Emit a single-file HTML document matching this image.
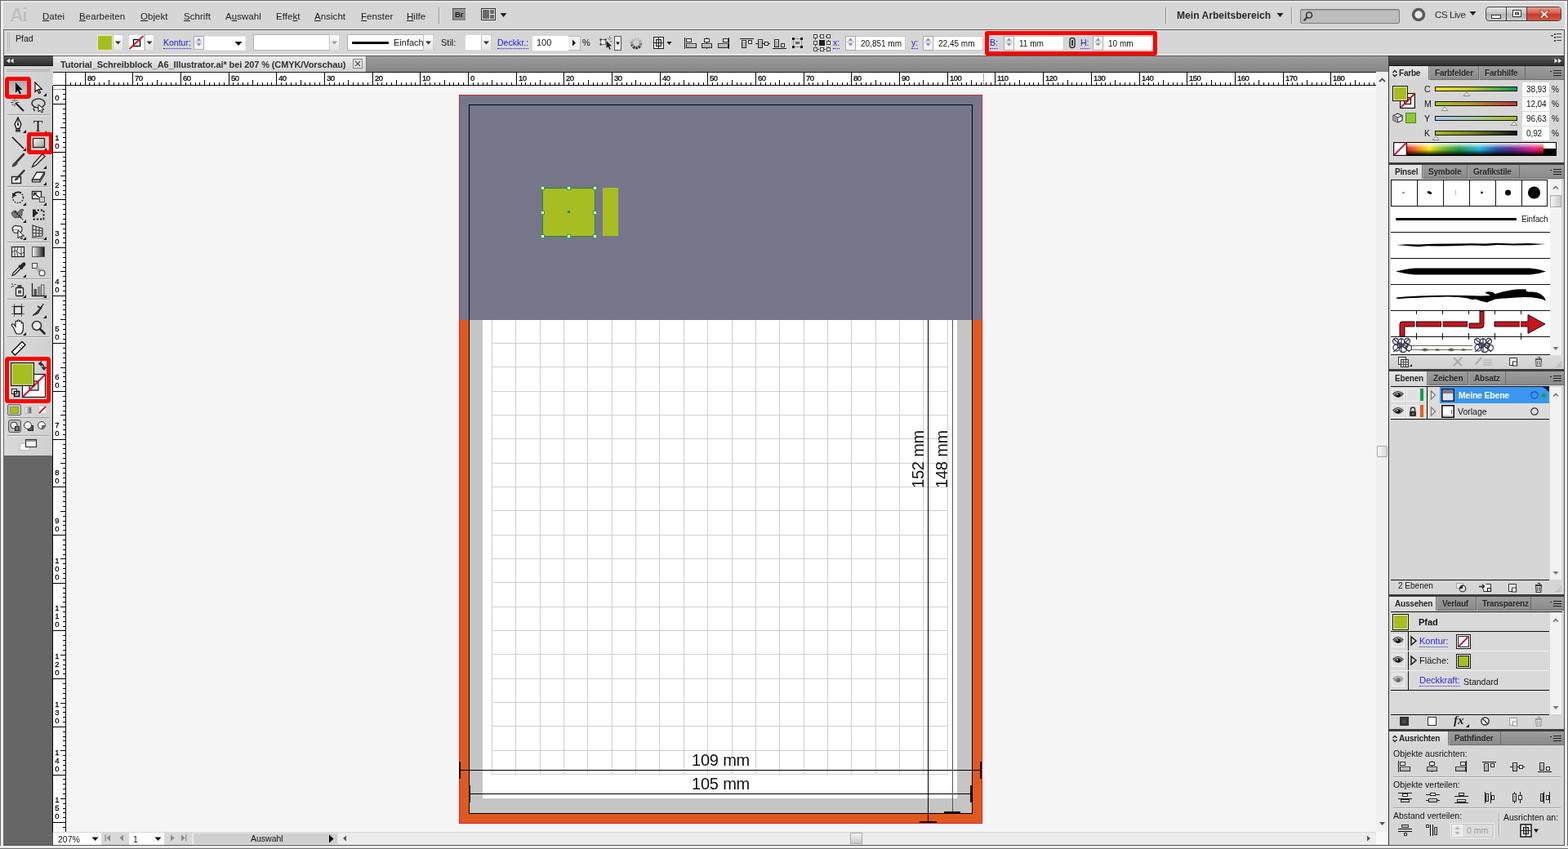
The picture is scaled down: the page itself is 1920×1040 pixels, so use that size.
<!DOCTYPE html>
<html lang="de"><head><meta charset="utf-8"><title>Adobe Illustrator – Tutorial_Schreibblock_A6_Illustrator.ai</title>
<style>
*{box-sizing:border-box;margin:0;padding:0}
html,body{width:1920px;height:1040px;overflow:hidden;background:#d6d6d6}
body{font-family:"Liberation Sans","DejaVu Sans",sans-serif;font-size:11px;color:#111;line-height:1}
#app{will-change:transform;position:relative;width:1920px;height:1040px;overflow:hidden;background:#d6d6d6}
.a{position:absolute}
.t{position:absolute;white-space:nowrap;line-height:1}
svg{position:absolute;overflow:visible}
.blue{color:#2a2ad0}
.dot{border-bottom:1px dotted #2a2ad0}

</style></head>
<body>
<div id="app">
<div class="a" style="left:0px;top:0px;width:1920px;height:1040px;background:#d6d6d6"></div>
<div class="a" style="left:0px;top:0px;width:1920px;height:1px;background:#6a6a6a"></div>
<div class="a" style="left:0px;top:1px;width:1920px;height:2px;background:#e9e9e9"></div>
<div class="a" style="left:0px;top:0px;width:1px;height:1040px;background:#6e6e6e"></div>
<div class="a" style="left:1px;top:1px;width:3px;height:1039px;background:#eeeeee"></div>
<div class="a" style="left:1919px;top:0px;width:1px;height:1040px;background:#606666"></div>
<div class="a" style="left:1916px;top:1px;width:3px;height:1039px;background:#eeeeee"></div>
<div class="a" style="left:0px;top:1036px;width:1920px;height:3px;background:#f6f6f6"></div>
<div class="a" style="left:0px;top:1037px;width:1920px;height:1px;background:#dedede"></div>
<div class="a" style="left:0px;top:1039px;width:1920px;height:1px;background:#6a6a6a"></div>
<div class="a" style="left:4px;top:1035px;width:1912px;height:1px;background:#4e4e4e"></div>
<span class="t " style="left:12px;top:7.5px;font-size:23.5px;color:#c0c0c0;font-weight:bold;letter-spacing:-1.6px;text-shadow:0 1px 0 #ececec">Ai</span>
<span class="t " style="left:52px;top:14.6px;font-size:11.5px;color:#1c1c1c;letter-spacing:0.05px"><u>D</u>atei</span>
<span class="t " style="left:97px;top:14.6px;font-size:11.5px;color:#1c1c1c;letter-spacing:0.05px"><u>B</u>earbeiten</span>
<span class="t " style="left:172px;top:14.6px;font-size:11.5px;color:#1c1c1c;letter-spacing:0.05px"><u>O</u>bjekt</span>
<span class="t " style="left:225px;top:14.6px;font-size:11.5px;color:#1c1c1c;letter-spacing:0.05px"><u>S</u>chrift</span>
<span class="t " style="left:276px;top:14.6px;font-size:11.5px;color:#1c1c1c;letter-spacing:0.05px">A<u>u</u>swahl</span>
<span class="t " style="left:338px;top:14.6px;font-size:11.5px;color:#1c1c1c;letter-spacing:0.05px">Effe<u>k</u>t</span>
<span class="t " style="left:385px;top:14.6px;font-size:11.5px;color:#1c1c1c;letter-spacing:0.05px"><u>A</u>nsicht</span>
<span class="t " style="left:442px;top:14.6px;font-size:11.5px;color:#1c1c1c;letter-spacing:0.05px"><u>F</u>enster</span>
<span class="t " style="left:498px;top:14.6px;font-size:11.5px;color:#1c1c1c;letter-spacing:0.05px"><u>H</u>ilfe</span>
<div class="a" style="left:537px;top:9px;width:1px;height:20px;background:#8e8e8e"></div>
<div class="a" style="left:538px;top:9px;width:1px;height:20px;background:#eee"></div>
<div class="a" style="left:554px;top:10px;width:16px;height:15px;background:linear-gradient(#9a9a9a,#868686);border-top:1px solid #4a4a4a;border-left:1px solid #5a5a5a"></div>
<span class="t " style="left:557px;top:13px;font-size:9.5px;color:#1e1e1e;font-weight:bold;letter-spacing:-0.2px">Br</span>
<svg width="20" height="16" style="left:589px;top:10px" shape-rendering="crispEdges"><rect x="0" y="0" width="18" height="15" fill="#2e2e2e"/><rect x="1" y="1" width="16" height="13" fill="#e8e8e8"/><rect x="2" y="2" width="8" height="11" fill="#6a6a6a"/><rect x="11" y="2" width="5" height="5" fill="#6a6a6a"/><rect x="11" y="8" width="5" height="5" fill="#6a6a6a"/></svg>
<svg width="10" height="8" style="left:612px;top:15px"><path d="M0.5 1 h8 l-4 5 z" fill="#222"/></svg>
<div class="a" style="left:1427px;top:9px;width:1px;height:20px;background:#8e8e8e"></div>
<div class="a" style="left:1428px;top:9px;width:1px;height:20px;background:#eee"></div>
<span class="t " style="left:1441px;top:13px;font-size:12px;color:#2a2a2a;font-weight:bold;letter-spacing:0.05px">Mein Arbeitsbereich</span>
<svg width="10" height="8" style="left:1563px;top:15px"><path d="M0.5 1 h8 l-4 5 z" fill="#222"/></svg>
<div class="a" style="left:1581px;top:9px;width:1px;height:20px;background:#8e8e8e"></div>
<div class="a" style="left:1582px;top:9px;width:1px;height:20px;background:#eee"></div>
<div class="a" style="left:1592px;top:11px;width:122px;height:18px;background:#bdbdbd;border:1px solid #7c7c7c;border-radius:2px;box-shadow:inset 0 1px 1px #a0a0a0"></div>
<svg width="14" height="14" style="left:1595px;top:13px"><circle cx="8" cy="5.5" r="3.5" fill="none" stroke="#333" stroke-width="1.6"/><path d="M5.5 8 L1.5 12.5" stroke="#333" stroke-width="2"/></svg>
<svg width="20" height="20" style="left:1727px;top:8px"><circle cx="10" cy="10" r="6.5" fill="#e8e8e8" stroke="#5a5a5a" stroke-width="3.5"/></svg>
<span class="t " style="left:1757px;top:13px;font-size:11.5px;color:#2a2a2a;letter-spacing:-0.4px">CS Live</span>
<svg width="10" height="8" style="left:1799px;top:13px"><path d="M0.5 1 h8 l-4 5 z" fill="#222"/></svg>
<div class="a" style="left:1819px;top:8px;width:93px;height:18px;border:1px solid #3c3c3c;border-radius:4px;background:linear-gradient(#e4e4e4,#c4c4c4 45%,#b0b0b0 50%,#cfcfcf);box-shadow:0 0 0 1px rgba(255,255,255,.5)"></div>
<div class="a" style="left:1870px;top:9px;width:41px;height:16px;border-radius:0 3px 3px 0;background:linear-gradient(#e8998c,#d9604e 45%,#c83a26 50%,#d8573f)"></div>
<div class="a" style="left:1844px;top:9px;width:1px;height:16px;background:#3c3c3c"></div>
<div class="a" style="left:1869px;top:9px;width:1px;height:16px;background:#3c3c3c"></div>
<svg width="93" height="18" style="left:1819px;top:8px"><rect x="7.5" y="10.5" width="11" height="4" fill="#fff" stroke="#333"/><rect x="33.500" y="4.5" width="10" height="8" fill="#fff" stroke="#333"/><rect x="36.5" y="7.5" width="4" height="2" fill="#bbb" stroke="#333"/><path d="M66 5 l3.5 0 l2.500 3 l2.500 -3 l3.500 0 l-4 4.500 l4 4.500 l-3.500 0 l-2.500 -3 l-2.500 3 l-3.500 0 l4 -4.500 z" fill="#fff" stroke="#6a2a20" stroke-width="0.8"/></svg>
<div class="a" style="left:4px;top:35px;width:1912px;height:1px;background:#e8e8e8"></div>
<div class="a" style="left:4px;top:36px;width:1912px;height:1px;background:#4e4e4e"></div>
<div class="a" style="left:1915px;top:36px;width:1px;height:999px;background:#4e4e4e"></div>
<div class="a" style="left:4px;top:37px;width:1px;height:998px;background:#6a6a6a"></div>
<div class="a" style="left:5px;top:37px;width:1911px;height:30px;background:#d6d6d6"></div>
<div class="a" style="left:5px;top:37px;width:1911px;height:1px;background:#e6e6e6"></div>
<div class="a" style="left:5px;top:66px;width:1911px;height:2px;background:#e9e9e9"></div>
<svg width="4" height="24" style="left:9px;top:40px" shape-rendering="crispEdges"><rect x="0" y="0" width="1" height="1" fill="#a0a0a0"/><rect x="0" y="2" width="1" height="1" fill="#a0a0a0"/><rect x="0" y="4" width="1" height="1" fill="#a0a0a0"/><rect x="0" y="6" width="1" height="1" fill="#a0a0a0"/><rect x="0" y="8" width="1" height="1" fill="#a0a0a0"/><rect x="0" y="10" width="1" height="1" fill="#a0a0a0"/><rect x="0" y="12" width="1" height="1" fill="#a0a0a0"/><rect x="0" y="14" width="1" height="1" fill="#a0a0a0"/><rect x="0" y="16" width="1" height="1" fill="#a0a0a0"/><rect x="0" y="18" width="1" height="1" fill="#a0a0a0"/><rect x="0" y="20" width="1" height="1" fill="#a0a0a0"/><rect x="0" y="22" width="1" height="1" fill="#a0a0a0"/><rect x="2" y="0" width="1" height="1" fill="#a0a0a0"/><rect x="2" y="2" width="1" height="1" fill="#a0a0a0"/><rect x="2" y="4" width="1" height="1" fill="#a0a0a0"/><rect x="2" y="6" width="1" height="1" fill="#a0a0a0"/><rect x="2" y="8" width="1" height="1" fill="#a0a0a0"/><rect x="2" y="10" width="1" height="1" fill="#a0a0a0"/><rect x="2" y="12" width="1" height="1" fill="#a0a0a0"/><rect x="2" y="14" width="1" height="1" fill="#a0a0a0"/><rect x="2" y="16" width="1" height="1" fill="#a0a0a0"/><rect x="2" y="18" width="1" height="1" fill="#a0a0a0"/><rect x="2" y="20" width="1" height="1" fill="#a0a0a0"/><rect x="2" y="22" width="1" height="1" fill="#a0a0a0"/></svg>
<span class="t " style="left:19px;top:41.5px;font-size:10.5px;color:#111;">Pfad</span>
<div class="a" style="left:119px;top:43px;width:19px;height:19px;background:#a8bd22;border:1px solid #f0f0b0"></div>
<div class="a" style="left:138px;top:42px;width:13px;height:20px;background:linear-gradient(#fdfdfd,#e4e4e4);border:1px dotted #b4b4b4;border-left:1px solid #c0c0c0"></div><svg width="13" height="20" style="left:138px;top:42px"><path d="M3.0 8.5 h7 l-3.5 4 z" fill="#333"/></svg>
<div class="a" style="left:157px;top:42px;width:20px;height:20px;background:#fff;border:1px dotted #b8b8b8"></div>
<svg width="20" height="20" style="left:157px;top:42px"><rect x="6.5" y="6.5" width="8" height="8" fill="none" stroke="#000" stroke-width="1.3"/><path d="M1.5 18 L18.5 2" stroke="#d0102a" stroke-width="1.8"/></svg>
<div class="a" style="left:177px;top:42px;width:12px;height:20px;background:linear-gradient(#fdfdfd,#e4e4e4);border:1px dotted #b4b4b4;border-left:1px solid #c0c0c0"></div><svg width="12" height="20" style="left:177px;top:42px"><path d="M2.5 8.5 h7 l-3.5 4 z" fill="#333"/></svg>
<span class="t " style="left:200px;top:47px;font-size:10.5px;color:#1c1ccc;border-bottom:1px dotted #1c1ccc;padding-bottom:1px">Kontur:</span>
<div class="a" style="left:237px;top:44px;width:64px;height:18px;background:#fff;border:1px solid #e8e8e8"></div>
<div class="a" style="left:237px;top:44px;width:13px;height:17px;background:#f4f4f4;border:1px solid #a9a9a9"></div><svg width="13" height="17" style="left:237px;top:44px"><path d="M3.5 6 l3 -3.5 l3 3.5 z" fill="#8a8ac8"/><path d="M3.5 9 l3 3.5 l3 -3.5 z" fill="#8a8ac8"/><rect x="2" y="7" width="9" height="1" fill="#bbb"/></svg>
<svg width="10" height="8" style="left:287px;top:50px"><path d="M0.5 1 h9 l-4.500 5 z" fill="#000"/></svg>
<div class="a" style="left:310px;top:42px;width:94px;height:20px;background:#fff;border:1px solid #b0b0b0"></div>
<div class="a" style="left:403px;top:42px;width:13px;height:20px;background:linear-gradient(#fdfdfd,#e4e4e4);border:1px dotted #b4b4b4;border-left:1px solid #c0c0c0"></div><svg width="13" height="20" style="left:403px;top:42px"><path d="M3.0 8.5 h7 l-3.5 4 z" fill="#999"/></svg>
<div class="a" style="left:425px;top:42px;width:94px;height:20px;background:#fff;border:1px solid #b0b0b0"></div>
<div class="a" style="left:431px;top:51px;width:45px;height:3px;background:#000;border-radius:1px"></div>
<span class="t " style="left:482px;top:47px;font-size:11px;color:#111;">Einfach</span>
<div class="a" style="left:518px;top:42px;width:13px;height:20px;background:linear-gradient(#fdfdfd,#e4e4e4);border:1px dotted #b4b4b4;border-left:1px solid #c0c0c0"></div><svg width="13" height="20" style="left:518px;top:42px"><path d="M3.0 8.5 h7 l-3.5 4 z" fill="#333"/></svg>
<span class="t " style="left:540px;top:47px;font-size:11px;color:#111;">Stil:</span>
<div class="a" style="left:569px;top:42px;width:21px;height:20px;background:#fff;border:1px dotted #b8b8b8"></div>
<div class="a" style="left:589px;top:42px;width:13px;height:20px;background:linear-gradient(#fdfdfd,#e4e4e4);border:1px dotted #b4b4b4;border-left:1px solid #c0c0c0"></div><svg width="13" height="20" style="left:589px;top:42px"><path d="M3.0 8.5 h7 l-3.5 4 z" fill="#333"/></svg>
<span class="t " style="left:609px;top:47px;font-size:10.5px;color:#1c1ccc;border-bottom:1px dotted #1c1ccc;padding-bottom:1px">Deckkr.:</span>
<div class="a" style="left:652px;top:44px;width:44px;height:18px;background:#fff"></div>
<span class="t " style="left:657px;top:47px;font-size:11px;color:#111;">100</span>
<div class="a" style="left:696px;top:44px;width:15px;height:18px;background:#f0f0f0;border:1px solid #b8b8b8;border-left:none"></div>
<svg width="8" height="10" style="left:700px;top:48px"><path d="M1 0.500 l4 4 l-4 4 z" fill="#111"/></svg>
<span class="t " style="left:713px;top:47px;font-size:11px;color:#111;">%</span>
<svg width="30" height="24" style="left:733px;top:40px"><rect x="2.500" y="8.500" width="6" height="6" fill="#e8e8e8" stroke="#777"/><rect x="1.500" y="7.500" width="2" height="2" fill="#222"/><rect x="7.500" y="7.500" width="2" height="2" fill="#222"/><rect x="1.500" y="13.500" width="2" height="2" fill="#222"/><path d="M9.500 10 L9.500 19 L11.700 17 L13.300 20.800 L14.800 20.200 L13.200 16.500 L16 16.300 Z" fill="#1a1a1a"/><path d="M11 6.500 l2.500 2.500 M16 6 l-2 2.500 M17 11 l-3 -0.500 M13.500 4 v3" stroke="#777" stroke-width="1"/><rect x="19.500" y="4.500" width="8" height="17" fill="#ededed" stroke="#555"/><path d="M21 11.500 h5 l-2.500 3.500 z" fill="#111"/></svg>
<svg width="20" height="20" style="left:769px;top:43px"><defs><linearGradient id="wg" x1="0" y1="0" x2="0" y2="1"><stop offset="0" stop-color="#c4c4c4"/><stop offset="0.5" stop-color="#8a8a8a"/><stop offset="1" stop-color="#2a2a2a"/></linearGradient></defs><circle cx="10" cy="10" r="5.500" fill="none" stroke="url(#wg)" stroke-width="3.600" stroke-dasharray="2.400 0.900"/><circle cx="10" cy="10" r="3.300" fill="#d0d0d0"/></svg>
<svg width="26" height="20" style="left:799px;top:43px" shape-rendering="crispEdges"><rect x="1" y="2" width="13" height="15" fill="#222"/><rect x="2" y="3" width="11" height="13" fill="#f4f4f4"/><rect x="4" y="5" width="7" height="9" fill="#222"/><rect x="5" y="6" width="5" height="7" fill="#c8c8c8"/><rect x="7" y="3" width="1" height="13" fill="#222"/><rect x="2" y="9" width="11" height="1" fill="#222"/><path d="M17.500 8 h6 l-3 4 z" fill="#111" shape-rendering="auto"/></svg>
<svg width="18" height="14" viewBox="0 0 18 14" style="left:838px;top:46px" shape-rendering="crispEdges"><rect x="0" y="0" width="1" height="14" fill="#1a1a1a"/><rect x="2" y="1" width="7" height="5" fill="#2a2a2a"/><rect x="3" y="2" width="5" height="3" fill="#f2f2f2"/><rect x="2" y="7" width="13" height="6" fill="#2a2a2a"/><rect x="3" y="8" width="11" height="4" fill="#b4b4b4"/><rect x="3" y="8" width="11" height="1" fill="#e8e8e8"/></svg>
<svg width="18" height="14" viewBox="0 0 18 14" style="left:858px;top:46px" shape-rendering="crispEdges"><rect x="7" y="0" width="1" height="14" fill="#1a1a1a"/><rect x="4" y="1" width="7" height="5" fill="#2a2a2a"/><rect x="5" y="2" width="5" height="3" fill="#f2f2f2"/><rect x="1" y="7" width="13" height="6" fill="#2a2a2a"/><rect x="2" y="8" width="11" height="4" fill="#b4b4b4"/><rect x="2" y="8" width="11" height="1" fill="#e8e8e8"/></svg>
<svg width="18" height="14" viewBox="0 0 18 14" style="left:878px;top:46px" shape-rendering="crispEdges"><rect x="14" y="0" width="1" height="14" fill="#1a1a1a"/><rect x="7" y="1" width="7" height="5" fill="#2a2a2a"/><rect x="8" y="2" width="5" height="3" fill="#f2f2f2"/><rect x="1" y="7" width="13" height="6" fill="#2a2a2a"/><rect x="2" y="8" width="11" height="4" fill="#b4b4b4"/><rect x="2" y="8" width="11" height="1" fill="#e8e8e8"/></svg>
<svg width="18" height="14" viewBox="0 0 18 14" style="left:906px;top:46px" shape-rendering="crispEdges"><rect x="0" y="1" width="17" height="1" fill="#1a1a1a"/><rect x="2" y="3" width="6" height="10" fill="#2a2a2a"/><rect x="3" y="4" width="4" height="8" fill="#b4b4b4"/><rect x="3" y="4" width="4" height="1" fill="#e8e8e8"/><rect x="10" y="3" width="5" height="5" fill="#2a2a2a"/><rect x="11" y="4" width="3" height="3" fill="#f2f2f2"/></svg>
<svg width="18" height="14" viewBox="0 0 18 14" style="left:925px;top:46px" shape-rendering="crispEdges"><rect x="0" y="7" width="18" height="1" fill="#1a1a1a"/><rect x="3" y="2" width="6" height="11" fill="#2a2a2a"/><rect x="4" y="3" width="4" height="9" fill="#b4b4b4"/><rect x="4" y="3" width="4" height="1" fill="#e8e8e8"/><rect x="11" y="5" width="5" height="5" fill="#2a2a2a"/><rect x="12" y="6" width="3" height="3" fill="#f2f2f2"/></svg>
<svg width="18" height="14" viewBox="0 0 18 14" style="left:946px;top:46px" shape-rendering="crispEdges"><rect x="0" y="13" width="17" height="1" fill="#1a1a1a"/><rect x="2" y="2" width="6" height="10" fill="#2a2a2a"/><rect x="3" y="3" width="4" height="8" fill="#b4b4b4"/><rect x="3" y="3" width="4" height="1" fill="#e8e8e8"/><rect x="10" y="7" width="5" height="5" fill="#2a2a2a"/><rect x="11" y="8" width="3" height="3" fill="#f2f2f2"/></svg>
<svg width="16" height="16" style="left:969px;top:45px" shape-rendering="crispEdges"><rect x="1" y="1" width="3" height="3" fill="#111"/><rect x="11" y="1" width="3" height="3" fill="#111"/><rect x="1" y="11" width="3" height="3" fill="#111"/><rect x="11" y="11" width="3" height="3" fill="#111"/><rect x="5" y="6" width="5" height="3" fill="#666"/><path d="M4.500 2.500 h6 M4.500 12.500 h6 M2.500 4.500 v6 M12.500 4.500 v6" stroke="#555" stroke-dasharray="1 1"/></svg>
<svg width="22" height="22" style="left:996px;top:42px" shape-rendering="crispEdges"><rect x="2.500" y="2.500" width="16" height="16" fill="none" stroke="#444" stroke-dasharray="2 2"/><rect x="7" y="7" width="7" height="7" fill="#222"/><rect x="0.5" y="0.5" width="4" height="4" fill="#f4f4f4" stroke="#444"/><rect x="0.5" y="8.5" width="4" height="4" fill="#f4f4f4" stroke="#444"/><rect x="0.5" y="16.5" width="4" height="4" fill="#f4f4f4" stroke="#444"/><rect x="8.5" y="0.5" width="4" height="4" fill="#f4f4f4" stroke="#444"/><rect x="8.5" y="16.5" width="4" height="4" fill="#f4f4f4" stroke="#444"/><rect x="16.5" y="0.5" width="4" height="4" fill="#f4f4f4" stroke="#444"/><rect x="16.5" y="8.5" width="4" height="4" fill="#f4f4f4" stroke="#444"/><rect x="16.5" y="16.5" width="4" height="4" fill="#f4f4f4" stroke="#444"/></svg>
<span class="t " style="left:1020px;top:47px;font-size:10.5px;color:#1c1ccc;border-bottom:1px dotted #1c1ccc;padding-bottom:1px">x:</span><div class="a" style="left:1035px;top:44px;width:74px;height:18px;background:#fff;border:1px solid #c8c8c8"></div><div class="a" style="left:1035px;top:44px;width:13px;height:18px;background:#f4f4f4;border:1px solid #a9a9a9"></div><svg width="13" height="18" style="left:1035px;top:44px"><path d="M3.5 6 l3 -3.5 l3 3.5 z" fill="#8a8ac8"/><path d="M3.5 9 l3 3.5 l3 -3.5 z" fill="#8a8ac8"/><rect x="2" y="7" width="9" height="1" fill="#bbb"/></svg><span class="t " style="left:1054px;top:49px;font-size:10px;color:#111;">20,851 mm</span>
<span class="t " style="left:1116px;top:47px;font-size:10.5px;color:#1c1ccc;border-bottom:1px dotted #1c1ccc;padding-bottom:1px">y:</span><div class="a" style="left:1130px;top:44px;width:74px;height:18px;background:#fff;border:1px solid #c8c8c8"></div><div class="a" style="left:1130px;top:44px;width:13px;height:18px;background:#f4f4f4;border:1px solid #a9a9a9"></div><svg width="13" height="18" style="left:1130px;top:44px"><path d="M3.5 6 l3 -3.5 l3 3.5 z" fill="#8a8ac8"/><path d="M3.5 9 l3 3.5 l3 -3.5 z" fill="#8a8ac8"/><rect x="2" y="7" width="9" height="1" fill="#bbb"/></svg><span class="t " style="left:1149px;top:49px;font-size:10px;color:#111;">22,45 mm</span>
<span class="t " style="left:1212px;top:47px;font-size:10.5px;color:#1c1ccc;border-bottom:1px dotted #1c1ccc;padding-bottom:1px">B:</span><div class="a" style="left:1229px;top:44px;width:74px;height:18px;background:#fff;border:1px solid #c8c8c8"></div><div class="a" style="left:1229px;top:44px;width:13px;height:18px;background:#f4f4f4;border:1px solid #a9a9a9"></div><svg width="13" height="18" style="left:1229px;top:44px"><path d="M3.5 6 l3 -3.5 l3 3.5 z" fill="#8a8ac8"/><path d="M3.5 9 l3 3.5 l3 -3.5 z" fill="#8a8ac8"/><rect x="2" y="7" width="9" height="1" fill="#bbb"/></svg><span class="t " style="left:1248px;top:49px;font-size:10px;color:#111;">11 mm</span>
<svg width="10" height="16" style="left:1308px;top:45px"><rect x="2" y="1.500" width="6" height="12" rx="3" fill="#ddd" stroke="#333" stroke-width="1.500"/><rect x="4" y="4" width="2" height="7" fill="#333"/></svg>
<span class="t " style="left:1323px;top:47px;font-size:10.5px;color:#1c1ccc;border-bottom:1px dotted #1c1ccc;padding-bottom:1px">H:</span><div class="a" style="left:1338px;top:44px;width:74px;height:18px;background:#fff;border:1px solid #c8c8c8"></div><div class="a" style="left:1338px;top:44px;width:13px;height:18px;background:#f4f4f4;border:1px solid #a9a9a9"></div><svg width="13" height="18" style="left:1338px;top:44px"><path d="M3.5 6 l3 -3.5 l3 3.5 z" fill="#8a8ac8"/><path d="M3.5 9 l3 3.5 l3 -3.5 z" fill="#8a8ac8"/><rect x="2" y="7" width="9" height="1" fill="#bbb"/></svg><span class="t " style="left:1357px;top:49px;font-size:10px;color:#111;">10 mm</span>
<div class="a" style="left:1206px;top:38px;width:211px;height:30px;border:5px solid #ff0000;border-radius:3px"></div>
<svg width="14" height="12" style="left:1899px;top:40px" shape-rendering="crispEdges"><path d="M0 3 h3 l-1.500 2 z" fill="#444"/><rect x="4" y="1" width="2" height="2" fill="#444"/><rect x="4" y="5" width="2" height="2" fill="#444"/><rect x="4" y="9" width="2" height="2" fill="#444"/><rect x="7" y="1" width="6" height="1" fill="#444"/><rect x="7" y="5" width="6" height="1" fill="#444"/><rect x="7" y="9" width="6" height="1" fill="#444"/></svg>
<div class="a" style="left:65px;top:68px;width:1635px;height:20px;background:linear-gradient(#9c9c9c,#858585);border-top:1px solid #5a5a5a"></div>
<div class="a" style="left:65px;top:68px;width:384px;height:20px;background:linear-gradient(#ececec,#d2d2d2);border-top:1px solid #666;border-right:1px solid #777"></div>
<span class="t " style="left:74px;top:74px;font-size:11px;color:#303030;font-weight:bold;letter-spacing:-0.1px">Tutorial_Schreibblock_A6_Illustrator.ai* bei 207 % (CMYK/Vorschau)</span>
<svg width="12" height="12" style="left:432px;top:72px"><rect x="0.500" y="0.500" width="11" height="11" fill="#e4e4e4" stroke="#888"/><path d="M3 3 l6 6 M9 3 l-6 6" stroke="#555" stroke-width="1.300"/></svg><div class="a" style="left:5px;top:68px;width:60px;height:13px;background:linear-gradient(#555,#2c2c2c);border-top:1px solid #222;border-bottom:1px solid #1a1a1a"></div>
<svg width="10" height="8" viewBox="0 0 10 8" style="left:8px;top:71px" ><path d="M4 0.500 v6 l-4 -3 z M8.500 0.500 v6 l-4 -3 z" fill="#e8e8e8"/></svg>
<div class="a" style="left:5px;top:81px;width:59px;height:477px;background:linear-gradient(90deg,#d9d9d9,#d0d0d0)"></div>
<div class="a" style="left:5px;top:558px;width:59px;height:477px;background:#666"></div>
<div class="a" style="left:8px;top:85px;width:53px;height:1px;background:#a8a8a8"></div>
<div class="a" style="left:8px;top:87px;width:53px;height:1px;background:#b4b4b4"></div>
<div class="a" style="left:9px;top:140px;width:51px;height:1px;background:#9e9e9e"></div>
<div class="a" style="left:9px;top:141px;width:51px;height:1px;background:#ececec"></div>
<div class="a" style="left:9px;top:228px;width:51px;height:1px;background:#9e9e9e"></div>
<div class="a" style="left:9px;top:229px;width:51px;height:1px;background:#ececec"></div>
<div class="a" style="left:9px;top:296px;width:51px;height:1px;background:#9e9e9e"></div>
<div class="a" style="left:9px;top:297px;width:51px;height:1px;background:#ececec"></div>
<div class="a" style="left:9px;top:341px;width:51px;height:1px;background:#9e9e9e"></div>
<div class="a" style="left:9px;top:342px;width:51px;height:1px;background:#ececec"></div>
<div class="a" style="left:9px;top:366px;width:51px;height:1px;background:#9e9e9e"></div>
<div class="a" style="left:9px;top:367px;width:51px;height:1px;background:#ececec"></div>
<div class="a" style="left:9px;top:412px;width:51px;height:1px;background:#9e9e9e"></div>
<div class="a" style="left:9px;top:413px;width:51px;height:1px;background:#ececec"></div>
<div class="a" style="left:9px;top:533px;width:51px;height:1px;background:#9e9e9e"></div>
<div class="a" style="left:9px;top:534px;width:51px;height:1px;background:#ececec"></div>
<div class="a" style="left:10px;top:98px;width:24px;height:19px;background:linear-gradient(#aaa,#cacaca);border:1px solid #888"></div>
<svg width="20" height="20" viewBox="0 0 20 20" style="left:12px;top:98px" ><path d="M7 3 L7 15.500 L9.800 12.800 L12 17.500 L13.800 16.600 L11.600 12 L15.500 12 Z" fill="#000"/></svg>
<svg width="20" height="20" viewBox="0 0 20 20" style="left:37px;top:98px" ><path d="M6 3 L6 14.500 L8.800 12 L10.800 16.500 L12.500 15.600 L10.500 11.300 L14.300 11.300 Z" fill="#fff" stroke="#111" stroke-width="1.200"/><path d="M20 20 h-4 l4 -4 z" fill="#111"/></svg>
<svg width="20" height="20" viewBox="0 0 20 20" style="left:12px;top:119px" ><path d="M7 7 L17 17" stroke="#222" stroke-width="2.200"/><path d="M6 1.500 v4 M6 8.500 v3 M1 6.500 h3.500 M8 6.500 h3.500 M2.500 3 l2 2 M9.500 3 l-2 2 M2.500 10 l2 -2" stroke="#444" stroke-width="1"/></svg>
<svg width="20" height="20" viewBox="0 0 20 20" style="left:37px;top:119px" ><ellipse cx="10" cy="7.500" rx="8" ry="5.500" fill="none" stroke="#333" stroke-width="1.600"/><path d="M5 12 q-2 3 1 5" fill="none" stroke="#333" stroke-width="1.300"/><path d="M10 9 L10 18 L12.300 15.800 L14 19 L15.500 18.200 L14 15.200 L17 15.200 Z" fill="#fff" stroke="#111" stroke-width="1"/></svg>
<svg width="20" height="20" viewBox="0 0 20 20" style="left:12px;top:143px" ><path d="M10 1 L14 9 L12 14.500 L8 14.500 L6 9 Z" fill="#f4f4f4" stroke="#111" stroke-width="1.300"/><path d="M10 2 v7" stroke="#111"/><circle cx="10" cy="9.500" r="1.200" fill="#111"/><rect x="7" y="15.500" width="6" height="3" fill="#333"/><path d="M20 20 h-4 l4 -4 z" fill="#111"/></svg>
<svg width="24" height="24" viewBox="0 0 24 24" style="left:35px;top:141px" ><text x="11.500" y="19.500" font-family="Liberation Serif,serif" font-size="19" text-anchor="middle" fill="#111">T</text><path d="M22 23 h-4 l4 -4 z" fill="#111"/></svg>
<svg width="20" height="20" viewBox="0 0 20 20" style="left:12px;top:165px" ><path d="M3 3 L17 17" stroke="#111" stroke-width="1.500"/><path d="M20 20 h-4 l4 -4 z" fill="#111"/></svg>
<svg width="20" height="20" viewBox="0 0 20 20" style="left:37px;top:165px" ><defs><linearGradient id="rg" x1="0" y1="0" x2="1" y2="1"><stop offset="0" stop-color="#fff"/><stop offset="1" stop-color="#9a9a9a"/></linearGradient></defs><rect x="3.500" y="4.500" width="14" height="11" fill="url(#rg)" stroke="#222" stroke-width="1.300"/><path d="M20 20 h-4 l4 -4 z" fill="#111"/></svg>
<svg width="20" height="20" viewBox="0 0 20 20" style="left:12px;top:187px" ><path d="M17 2 L8.500 11" stroke="#333" stroke-width="2.600" stroke-linecap="round"/><path d="M8.500 10.500 q-5 1 -6 7 q5 0 7.500 -5 z" fill="#444"/></svg>
<svg width="20" height="20" viewBox="0 0 20 20" style="left:37px;top:187px" ><path d="M15 1.500 L18 4.500 L7 15.500 L2.500 17.500 L4.500 13 Z" fill="#ddd" stroke="#222" stroke-width="1.300"/><path d="M2.500 17.500 L5 16.300 L3.700 15 Z" fill="#111"/><path d="M20 20 h-4 l4 -4 z" fill="#111"/></svg>
<svg width="20" height="20" viewBox="0 0 20 20" style="left:12px;top:207px" ><path d="M2.500 9.500 h11 v8 h-11 z" fill="#f4f4f4" stroke="#222" stroke-width="1.400"/><path d="M17.500 2 L10 10" stroke="#333" stroke-width="2.400" stroke-linecap="round"/><path d="M10 9.500 q-4 1 -4.500 5 q4 0 5.500 -3.500 z" fill="#444"/></svg>
<svg width="20" height="20" viewBox="0 0 20 20" style="left:37px;top:207px" ><path d="M8 4 L17.500 4 L12 13 L2.500 13 Z" fill="#f2f2f2" stroke="#222" stroke-width="1.300"/><path d="M2.500 13 L12 13 L12 16 L2.500 16 Z" fill="#bbb" stroke="#222" stroke-width="1.200"/><path d="M12 13 L17.500 4 L17.500 7 L12 16" fill="#888" stroke="#222" stroke-width="1"/><path d="M20 20 h-4 l4 -4 z" fill="#111"/></svg>
<svg width="20" height="20" viewBox="0 0 20 20" style="left:12px;top:232px" ><circle cx="10" cy="10" r="6.500" fill="none" stroke="#222" stroke-width="1.500" stroke-dasharray="1.600 1.600"/><path d="M4 8.500 A6.500 6.500 0 0 1 14 4.500" fill="none" stroke="#222" stroke-width="1.600"/><path d="M3 4 l0.500 5.500 l5 -2 z" fill="#222"/><path d="M20 20 h-4 l4 -4 z" fill="#111"/></svg>
<svg width="20" height="20" viewBox="0 0 20 20" style="left:37px;top:232px" ><rect x="2.500" y="2.500" width="11" height="9" fill="#eee" stroke="#222" stroke-width="1.300"/><rect x="11.500" y="9.500" width="6" height="6" fill="#ccc" stroke="#555"/><path d="M4.500 4.500 l6 5 M4.500 4.500 h3.500 M4.500 4.500 v3.500" stroke="#111" stroke-width="1.300" fill="none"/><path d="M20 20 h-4 l4 -4 z" fill="#111"/></svg>
<svg width="20" height="20" viewBox="0 0 20 20" style="left:12px;top:253px" ><path d="M2 8 q4 -6 8 0 q2 -6 7 -4 q-3 2 -2 6 q-2 5 -6 3 q-4 3 -7 -5 z" fill="#777" stroke="#444"/><path d="M6 6 L16 16" stroke="#111" stroke-width="1.500" stroke-dasharray="2 1.300"/><path d="M20 20 h-4 l4 -4 z" fill="#111"/></svg>
<svg width="20" height="20" viewBox="0 0 20 20" style="left:37px;top:253px" ><rect x="4.500" y="4.500" width="12" height="11" fill="none" stroke="#111" stroke-width="1.800" stroke-dasharray="2.200 2"/><path d="M3 3 L3 13 L10 8 Z" fill="#222"/></svg>
<svg width="20" height="20" viewBox="0 0 20 20" style="left:12px;top:274px" ><path d="M3 6 q2 -5 7 -3 q5 -1 5 4 q0 4 -5 4 q-6 2 -7 -5 z" fill="#eee" stroke="#333" stroke-width="1.300"/><path d="M4 7.500 h8" stroke="#333" stroke-dasharray="1 1"/><path d="M10 8 L10 18 L12.500 15.500 L14 19 L15.500 18 L14 15 L17.500 15 Z" fill="#fff" stroke="#111"/><path d="M20 20 h-4 l4 -4 z" fill="#111"/></svg>
<svg width="20" height="20" viewBox="0 0 20 20" style="left:37px;top:274px" ><path d="M3 2 L15 6 L15 15 L3 16 Z" fill="#ddd" stroke="#333" stroke-width="1.200"/><path d="M7 3.300 V15.700 M11 4.700 V15.300 M3 7 L15 9 M3 11.500 L15 12" stroke="#333" stroke-width="1"/><path d="M2 17.500 h15" stroke="#888"/><path d="M20 20 h-4 l4 -4 z" fill="#111"/></svg>
<svg width="20" height="20" viewBox="0 0 20 20" style="left:12px;top:299px" ><rect x="2.500" y="3.500" width="15" height="12" fill="#e8e8e8" stroke="#222" stroke-width="1.200"/><path d="M3 10 q4 -4 7 0 q4 4 7 0 M10 4 q-3 5 0 11 M6 4 v11 M14 4 v11" fill="none" stroke="#444" stroke-width="1"/></svg>
<svg width="20" height="20" viewBox="0 0 20 20" style="left:37px;top:299px" ><defs><linearGradient id="gg"><stop offset="0" stop-color="#fff"/><stop offset="1" stop-color="#111"/></linearGradient></defs><rect x="2.500" y="3.500" width="15" height="12" fill="url(#gg)" stroke="#555"/></svg>
<svg width="20" height="20" viewBox="0 0 20 20" style="left:12px;top:320px" ><path d="M3 17.500 L4 14.500 L11.500 7 L13.500 9 L6 16.500 Z" fill="#ddd" stroke="#222" stroke-width="1.200"/><path d="M11 5 L15.500 9.500 M12.500 6.500 L16 3 q2 -1.500 2.500 0.500 q0 1.500 -1.500 2 L14 9" fill="#333" stroke="#222" stroke-width="2"/><path d="M20 20 h-4 l4 -4 z" fill="#111"/></svg>
<svg width="20" height="20" viewBox="0 0 20 20" style="left:37px;top:320px" ><rect x="2.500" y="2.500" width="6" height="6" fill="#eee" stroke="#444"/><rect x="6" y="6" width="5" height="5" fill="#aaa" opacity=".6"/><rect x="9" y="9" width="4" height="4" fill="#888" opacity=".5"/><circle cx="14.500" cy="14.500" r="3.500" fill="#eee" stroke="#444" stroke-width="1.200"/></svg>
<svg width="20" height="20" viewBox="0 0 20 20" style="left:12px;top:345px" ><rect x="7.500" y="7.500" width="9" height="10" rx="1" fill="#eee" stroke="#222" stroke-width="1.300"/><rect x="10" y="10.500" width="4" height="4" fill="#555"/><rect x="9.500" y="4" width="5" height="3" fill="#444"/><path d="M2 3 h2 M3 5.500 h2 M5.500 3.500 h2 M1.500 6.500 h1.500" stroke="#333" stroke-width="1.200"/><path d="M20 20 h-4 l4 -4 z" fill="#111"/></svg>
<svg width="20" height="20" viewBox="0 0 20 20" style="left:37px;top:345px" ><path d="M2.500 2 V17.500 H18" fill="none" stroke="#222" stroke-width="1.300"/><rect x="4.500" y="9" width="3.500" height="8" fill="#555"/><rect x="9" y="6" width="3.500" height="11" fill="#888"/><rect x="13.500" y="4" width="3.500" height="13" fill="#ccc" stroke="#444" stroke-width=".8"/><path d="M20 20 h-4 l4 -4 z" fill="#111"/></svg>
<svg width="20" height="20" viewBox="0 0 20 20" style="left:12px;top:370px" ><rect x="5.500" y="5.500" width="9" height="9" fill="#e4e4e4" stroke="#111" stroke-width="1.400"/><path d="M5.500 2 v3 M14.500 2 v3 M5.500 15 v3 M14.500 15 v3 M2 5.500 h3 M2 14.500 h3 M15 5.500 h3 M15 14.500 h3" stroke="#666"/></svg>
<svg width="20" height="20" viewBox="0 0 20 20" style="left:37px;top:370px" ><path d="M16.500 2 L8 12 L3 16.500 L9.500 14 Z" fill="#444" stroke="#222"/><path d="M9 5 l5 3" stroke="#222" stroke-width="1.500"/><path d="M20 20 h-4 l4 -4 z" fill="#111"/></svg>
<svg width="20" height="20" viewBox="0 0 20 20" style="left:12px;top:391px" ><path d="M5 11 L3 8.500 q-1.500 -1.500 0 -2.500 q1.500 -0.500 2.500 1 L7 9 V3.500 q0 -1.500 1.200 -1.500 q1.200 0 1.200 1.500 V2.500 q0 -1.500 1.200 -1.500 q1.200 0 1.200 1.500 V3.500 q0 -1.500 1.200 -1.500 q1.200 0 1.200 1.500 V5.500 q0 -1.300 1.100 -1.300 q1.100 0 1.100 1.300 V12 q0 4 -3 6 H8.500 q-2 -2 -3.500 -7 z" fill="#fafafa" stroke="#222" stroke-width="1.200"/><path d="M20 20 h-4 l4 -4 z" fill="#111"/></svg>
<svg width="20" height="20" viewBox="0 0 20 20" style="left:37px;top:391px" ><circle cx="8" cy="8" r="5.500" fill="#e8e8e8" stroke="#333" stroke-width="1.500"/><path d="M12 12 L17.500 17.500" stroke="#222" stroke-width="2.600" stroke-linecap="round"/></svg>
<svg width="22" height="22" viewBox="0 0 22 22" style="left:12px;top:416px" ><path d="M15 2.500 L19 6.500 L6.500 19 L2.500 15 Z" fill="#fff" stroke="#111" stroke-width="1.500" stroke-linejoin="round"/><path d="M14 7 l1.500 1.500 M12 9 l1.500 1.500" stroke="#333"/></svg>
<svg width="62" height="60" viewBox="0 0 62 60" style="left:4px;top:436px" ><rect x="23.500" y="22.500" width="28" height="28" fill="#fff" stroke="#111" stroke-width="1.200"/><rect x="32" y="31" width="11" height="11" fill="#d8d8d8" stroke="#111" stroke-width="1.200"/><path d="M24 50 L51 23" stroke="#d0102a" stroke-width="2"/><rect x="9" y="8" width="29" height="29" fill="#111"/><rect x="10.200" y="9.200" width="26.600" height="26.600" fill="#f4f4c0"/><rect x="11.200" y="10.200" width="24.600" height="24.600" fill="#a8bd22"/><path d="M45 9 q4 0 5 5 M43.500 9.500 l3 -2.500 v5 z M50 17 l-2.500 -3 h5 z" fill="#333" stroke="#333" stroke-width="1.200"/><rect x="10.500" y="40.500" width="6" height="6" fill="#fff" stroke="#222"/><rect x="13.500" y="43.500" width="6" height="6" fill="none" stroke="#111" stroke-width="1.600"/></svg>
<div class="a" style="left:6px;top:437px;width:56px;height:57px;border:5px solid #ff0000;border-radius:4px"></div>
<div class="a" style="left:9px;top:495px;width:17px;height:14px;background:#c4c4c4;border:1px solid #666;border-radius:2px"></div>
<div class="a" style="left:12px;top:498px;width:11px;height:9px;background:#a8bd22;border:1px solid #8a9a30"></div>
<div class="a" style="left:30px;top:498px;width:9px;height:9px;background:linear-gradient(90deg,#fff,#555);border:1px solid #bbb"></div>
<svg width="10" height="10" viewBox="0 0 10 10" style="left:47px;top:497px" ><rect x="0.500" y="0.500" width="9" height="9" fill="#fff" stroke="#ccc"/><path d="M1 9 L9 1" stroke="#d0102a" stroke-width="1.800"/></svg>
<div class="a" style="left:9px;top:511px;width:51px;height:1px;background:#9e9e9e"></div>
<div class="a" style="left:10px;top:514px;width:16px;height:16px;background:#bdbdbd;border:1px solid #555;border-radius:3px"></div>
<svg width="14" height="14" viewBox="0 0 14 14" style="left:11px;top:515px" ><circle cx="6" cy="6" r="4" fill="#f2f2f2" stroke="#333"/><rect x="7.500" y="7.500" width="5" height="5" fill="#777" stroke="#222"/></svg>
<svg width="14" height="14" viewBox="0 0 14 14" style="left:28px;top:515px" ><rect x="6.500" y="6.500" width="6" height="6" fill="#555" stroke="#222"/><circle cx="6" cy="6" r="4.500" fill="#f2f2f2" stroke="#333"/></svg>
<svg width="14" height="14" viewBox="0 0 14 14" style="left:45px;top:515px" ><circle cx="6" cy="6" r="4.500" fill="#f2f2f2" stroke="#333"/><path d="M6 6 h4.500 a4.500 4.500 0 0 1 -4.500 4.500 z" fill="#666"/></svg>
<svg width="24" height="18" viewBox="0 0 24 18" style="left:23px;top:537px" ><rect x="1.500" y="6.500" width="12" height="8" fill="#fafafa" stroke="#bbb"/><rect x="8.500" y="1.500" width="13" height="9" fill="#f4f4f4" stroke="#333" stroke-width="1.200"/><rect x="9" y="2" width="12" height="2" fill="#999"/></svg>
<div class="a" style="left:6px;top:94px;width:32px;height:27px;border:5px solid #ff0000;border-radius:4px"></div>
<div class="a" style="left:33px;top:162px;width:32px;height:27px;border:5px solid #ff0000;border-radius:4px"></div><div class="a" id="canvas" style="left:81px;top:105px;width:1604px;height:914px;background:#f5f5f5"></div>
<div class="a" style="left:81px;top:105px;width:1604px;height:4px;background:#fff;border-top:1px solid #fdfdfd"></div>
<div class="a" style="left:81px;top:107px;width:1604px;height:1px;background:#efefef"></div>
<div class="a" id="hruler" style="left:65px;top:88px;width:1620px;height:17px;background:#fff;border-top:1px solid #1a1a1a;border-bottom:1px solid #000;overflow:hidden">
<svg width="1620" height="15" style="left:0;top:0" shape-rendering="crispEdges">
<rect x="15" y="0" width="1" height="15" fill="#000"/>
<rect x="1139" y="1" width="1" height="1" fill="#444"/><rect x="1139" y="3" width="1" height="1" fill="#444"/><rect x="1139" y="5" width="1" height="1" fill="#444"/><rect x="1139" y="7" width="1" height="1" fill="#444"/><rect x="1139" y="9" width="1" height="1" fill="#444"/><rect x="1139" y="11" width="1" height="1" fill="#444"/><rect x="1139" y="13" width="1" height="1" fill="#444"/>
<rect x="21" y="12" width="1" height="3" fill="#000"/>
<rect x="27" y="12" width="1" height="3" fill="#000"/>
<rect x="33" y="12" width="1" height="3" fill="#000"/>
<rect x="39" y="0" width="1" height="15" fill="#000"/>
<rect x="44" y="12" width="1" height="3" fill="#000"/>
<rect x="50" y="12" width="1" height="3" fill="#000"/>
<rect x="56" y="12" width="1" height="3" fill="#000"/>
<rect x="62" y="12" width="1" height="3" fill="#000"/>
<rect x="68" y="9" width="1" height="6" fill="#000"/>
<rect x="74" y="12" width="1" height="3" fill="#000"/>
<rect x="80" y="12" width="1" height="3" fill="#000"/>
<rect x="86" y="12" width="1" height="3" fill="#000"/>
<rect x="91" y="12" width="1" height="3" fill="#000"/>
<rect x="97" y="0" width="1" height="15" fill="#000"/>
<rect x="103" y="12" width="1" height="3" fill="#000"/>
<rect x="109" y="12" width="1" height="3" fill="#000"/>
<rect x="115" y="12" width="1" height="3" fill="#000"/>
<rect x="121" y="12" width="1" height="3" fill="#000"/>
<rect x="127" y="9" width="1" height="6" fill="#000"/>
<rect x="132" y="12" width="1" height="3" fill="#000"/>
<rect x="138" y="12" width="1" height="3" fill="#000"/>
<rect x="144" y="12" width="1" height="3" fill="#000"/>
<rect x="150" y="12" width="1" height="3" fill="#000"/>
<rect x="156" y="0" width="1" height="15" fill="#000"/>
<rect x="162" y="12" width="1" height="3" fill="#000"/>
<rect x="168" y="12" width="1" height="3" fill="#000"/>
<rect x="174" y="12" width="1" height="3" fill="#000"/>
<rect x="179" y="12" width="1" height="3" fill="#000"/>
<rect x="185" y="9" width="1" height="6" fill="#000"/>
<rect x="191" y="12" width="1" height="3" fill="#000"/>
<rect x="197" y="12" width="1" height="3" fill="#000"/>
<rect x="203" y="12" width="1" height="3" fill="#000"/>
<rect x="209" y="12" width="1" height="3" fill="#000"/>
<rect x="215" y="0" width="1" height="15" fill="#000"/>
<rect x="220" y="12" width="1" height="3" fill="#000"/>
<rect x="226" y="12" width="1" height="3" fill="#000"/>
<rect x="232" y="12" width="1" height="3" fill="#000"/>
<rect x="238" y="12" width="1" height="3" fill="#000"/>
<rect x="244" y="9" width="1" height="6" fill="#000"/>
<rect x="250" y="12" width="1" height="3" fill="#000"/>
<rect x="256" y="12" width="1" height="3" fill="#000"/>
<rect x="262" y="12" width="1" height="3" fill="#000"/>
<rect x="267" y="12" width="1" height="3" fill="#000"/>
<rect x="273" y="0" width="1" height="15" fill="#000"/>
<rect x="279" y="12" width="1" height="3" fill="#000"/>
<rect x="285" y="12" width="1" height="3" fill="#000"/>
<rect x="291" y="12" width="1" height="3" fill="#000"/>
<rect x="297" y="12" width="1" height="3" fill="#000"/>
<rect x="303" y="9" width="1" height="6" fill="#000"/>
<rect x="308" y="12" width="1" height="3" fill="#000"/>
<rect x="314" y="12" width="1" height="3" fill="#000"/>
<rect x="320" y="12" width="1" height="3" fill="#000"/>
<rect x="326" y="12" width="1" height="3" fill="#000"/>
<rect x="332" y="0" width="1" height="15" fill="#000"/>
<rect x="338" y="12" width="1" height="3" fill="#000"/>
<rect x="344" y="12" width="1" height="3" fill="#000"/>
<rect x="350" y="12" width="1" height="3" fill="#000"/>
<rect x="355" y="12" width="1" height="3" fill="#000"/>
<rect x="361" y="9" width="1" height="6" fill="#000"/>
<rect x="367" y="12" width="1" height="3" fill="#000"/>
<rect x="373" y="12" width="1" height="3" fill="#000"/>
<rect x="379" y="12" width="1" height="3" fill="#000"/>
<rect x="385" y="12" width="1" height="3" fill="#000"/>
<rect x="391" y="0" width="1" height="15" fill="#000"/>
<rect x="397" y="12" width="1" height="3" fill="#000"/>
<rect x="402" y="12" width="1" height="3" fill="#000"/>
<rect x="408" y="12" width="1" height="3" fill="#000"/>
<rect x="414" y="12" width="1" height="3" fill="#000"/>
<rect x="420" y="9" width="1" height="6" fill="#000"/>
<rect x="426" y="12" width="1" height="3" fill="#000"/>
<rect x="432" y="12" width="1" height="3" fill="#000"/>
<rect x="438" y="12" width="1" height="3" fill="#000"/>
<rect x="443" y="12" width="1" height="3" fill="#000"/>
<rect x="449" y="0" width="1" height="15" fill="#000"/>
<rect x="455" y="12" width="1" height="3" fill="#000"/>
<rect x="461" y="12" width="1" height="3" fill="#000"/>
<rect x="467" y="12" width="1" height="3" fill="#000"/>
<rect x="473" y="12" width="1" height="3" fill="#000"/>
<rect x="479" y="9" width="1" height="6" fill="#000"/>
<rect x="485" y="12" width="1" height="3" fill="#000"/>
<rect x="490" y="12" width="1" height="3" fill="#000"/>
<rect x="496" y="12" width="1" height="3" fill="#000"/>
<rect x="502" y="12" width="1" height="3" fill="#000"/>
<rect x="508" y="0" width="1" height="15" fill="#000"/>
<rect x="514" y="12" width="1" height="3" fill="#000"/>
<rect x="520" y="12" width="1" height="3" fill="#000"/>
<rect x="526" y="12" width="1" height="3" fill="#000"/>
<rect x="531" y="12" width="1" height="3" fill="#000"/>
<rect x="537" y="9" width="1" height="6" fill="#000"/>
<rect x="543" y="12" width="1" height="3" fill="#000"/>
<rect x="549" y="12" width="1" height="3" fill="#000"/>
<rect x="555" y="12" width="1" height="3" fill="#000"/>
<rect x="561" y="12" width="1" height="3" fill="#000"/>
<rect x="567" y="0" width="1" height="15" fill="#000"/>
<rect x="573" y="12" width="1" height="3" fill="#000"/>
<rect x="578" y="12" width="1" height="3" fill="#000"/>
<rect x="584" y="12" width="1" height="3" fill="#000"/>
<rect x="590" y="12" width="1" height="3" fill="#000"/>
<rect x="596" y="9" width="1" height="6" fill="#000"/>
<rect x="602" y="12" width="1" height="3" fill="#000"/>
<rect x="608" y="12" width="1" height="3" fill="#000"/>
<rect x="614" y="12" width="1" height="3" fill="#000"/>
<rect x="619" y="12" width="1" height="3" fill="#000"/>
<rect x="625" y="0" width="1" height="15" fill="#000"/>
<rect x="631" y="12" width="1" height="3" fill="#000"/>
<rect x="637" y="12" width="1" height="3" fill="#000"/>
<rect x="643" y="12" width="1" height="3" fill="#000"/>
<rect x="649" y="12" width="1" height="3" fill="#000"/>
<rect x="655" y="9" width="1" height="6" fill="#000"/>
<rect x="661" y="12" width="1" height="3" fill="#000"/>
<rect x="666" y="12" width="1" height="3" fill="#000"/>
<rect x="672" y="12" width="1" height="3" fill="#000"/>
<rect x="678" y="12" width="1" height="3" fill="#000"/>
<rect x="684" y="0" width="1" height="15" fill="#000"/>
<rect x="690" y="12" width="1" height="3" fill="#000"/>
<rect x="696" y="12" width="1" height="3" fill="#000"/>
<rect x="702" y="12" width="1" height="3" fill="#000"/>
<rect x="708" y="12" width="1" height="3" fill="#000"/>
<rect x="713" y="9" width="1" height="6" fill="#000"/>
<rect x="719" y="12" width="1" height="3" fill="#000"/>
<rect x="725" y="12" width="1" height="3" fill="#000"/>
<rect x="731" y="12" width="1" height="3" fill="#000"/>
<rect x="737" y="12" width="1" height="3" fill="#000"/>
<rect x="743" y="0" width="1" height="15" fill="#000"/>
<rect x="749" y="12" width="1" height="3" fill="#000"/>
<rect x="754" y="12" width="1" height="3" fill="#000"/>
<rect x="760" y="12" width="1" height="3" fill="#000"/>
<rect x="766" y="12" width="1" height="3" fill="#000"/>
<rect x="772" y="9" width="1" height="6" fill="#000"/>
<rect x="778" y="12" width="1" height="3" fill="#000"/>
<rect x="784" y="12" width="1" height="3" fill="#000"/>
<rect x="790" y="12" width="1" height="3" fill="#000"/>
<rect x="796" y="12" width="1" height="3" fill="#000"/>
<rect x="801" y="0" width="1" height="15" fill="#000"/>
<rect x="807" y="12" width="1" height="3" fill="#000"/>
<rect x="813" y="12" width="1" height="3" fill="#000"/>
<rect x="819" y="12" width="1" height="3" fill="#000"/>
<rect x="825" y="12" width="1" height="3" fill="#000"/>
<rect x="831" y="9" width="1" height="6" fill="#000"/>
<rect x="837" y="12" width="1" height="3" fill="#000"/>
<rect x="842" y="12" width="1" height="3" fill="#000"/>
<rect x="848" y="12" width="1" height="3" fill="#000"/>
<rect x="854" y="12" width="1" height="3" fill="#000"/>
<rect x="860" y="0" width="1" height="15" fill="#000"/>
<rect x="866" y="12" width="1" height="3" fill="#000"/>
<rect x="872" y="12" width="1" height="3" fill="#000"/>
<rect x="878" y="12" width="1" height="3" fill="#000"/>
<rect x="884" y="12" width="1" height="3" fill="#000"/>
<rect x="889" y="9" width="1" height="6" fill="#000"/>
<rect x="895" y="12" width="1" height="3" fill="#000"/>
<rect x="901" y="12" width="1" height="3" fill="#000"/>
<rect x="907" y="12" width="1" height="3" fill="#000"/>
<rect x="913" y="12" width="1" height="3" fill="#000"/>
<rect x="919" y="0" width="1" height="15" fill="#000"/>
<rect x="925" y="12" width="1" height="3" fill="#000"/>
<rect x="930" y="12" width="1" height="3" fill="#000"/>
<rect x="936" y="12" width="1" height="3" fill="#000"/>
<rect x="942" y="12" width="1" height="3" fill="#000"/>
<rect x="948" y="9" width="1" height="6" fill="#000"/>
<rect x="954" y="12" width="1" height="3" fill="#000"/>
<rect x="960" y="12" width="1" height="3" fill="#000"/>
<rect x="966" y="12" width="1" height="3" fill="#000"/>
<rect x="972" y="12" width="1" height="3" fill="#000"/>
<rect x="977" y="0" width="1" height="15" fill="#000"/>
<rect x="983" y="12" width="1" height="3" fill="#000"/>
<rect x="989" y="12" width="1" height="3" fill="#000"/>
<rect x="995" y="12" width="1" height="3" fill="#000"/>
<rect x="1001" y="12" width="1" height="3" fill="#000"/>
<rect x="1007" y="9" width="1" height="6" fill="#000"/>
<rect x="1013" y="12" width="1" height="3" fill="#000"/>
<rect x="1019" y="12" width="1" height="3" fill="#000"/>
<rect x="1024" y="12" width="1" height="3" fill="#000"/>
<rect x="1030" y="12" width="1" height="3" fill="#000"/>
<rect x="1036" y="0" width="1" height="15" fill="#000"/>
<rect x="1042" y="12" width="1" height="3" fill="#000"/>
<rect x="1048" y="12" width="1" height="3" fill="#000"/>
<rect x="1054" y="12" width="1" height="3" fill="#000"/>
<rect x="1060" y="12" width="1" height="3" fill="#000"/>
<rect x="1065" y="9" width="1" height="6" fill="#000"/>
<rect x="1071" y="12" width="1" height="3" fill="#000"/>
<rect x="1077" y="12" width="1" height="3" fill="#000"/>
<rect x="1083" y="12" width="1" height="3" fill="#000"/>
<rect x="1089" y="12" width="1" height="3" fill="#000"/>
<rect x="1095" y="0" width="1" height="15" fill="#000"/>
<rect x="1101" y="12" width="1" height="3" fill="#000"/>
<rect x="1107" y="12" width="1" height="3" fill="#000"/>
<rect x="1112" y="12" width="1" height="3" fill="#000"/>
<rect x="1118" y="12" width="1" height="3" fill="#000"/>
<rect x="1124" y="9" width="1" height="6" fill="#000"/>
<rect x="1130" y="12" width="1" height="3" fill="#000"/>
<rect x="1136" y="12" width="1" height="3" fill="#000"/>
<rect x="1142" y="12" width="1" height="3" fill="#000"/>
<rect x="1148" y="12" width="1" height="3" fill="#000"/>
<rect x="1153" y="0" width="1" height="15" fill="#000"/>
<rect x="1159" y="12" width="1" height="3" fill="#000"/>
<rect x="1165" y="12" width="1" height="3" fill="#000"/>
<rect x="1171" y="12" width="1" height="3" fill="#000"/>
<rect x="1177" y="12" width="1" height="3" fill="#000"/>
<rect x="1183" y="9" width="1" height="6" fill="#000"/>
<rect x="1189" y="12" width="1" height="3" fill="#000"/>
<rect x="1195" y="12" width="1" height="3" fill="#000"/>
<rect x="1200" y="12" width="1" height="3" fill="#000"/>
<rect x="1206" y="12" width="1" height="3" fill="#000"/>
<rect x="1212" y="0" width="1" height="15" fill="#000"/>
<rect x="1218" y="12" width="1" height="3" fill="#000"/>
<rect x="1224" y="12" width="1" height="3" fill="#000"/>
<rect x="1230" y="12" width="1" height="3" fill="#000"/>
<rect x="1236" y="12" width="1" height="3" fill="#000"/>
<rect x="1242" y="9" width="1" height="6" fill="#000"/>
<rect x="1247" y="12" width="1" height="3" fill="#000"/>
<rect x="1253" y="12" width="1" height="3" fill="#000"/>
<rect x="1259" y="12" width="1" height="3" fill="#000"/>
<rect x="1265" y="12" width="1" height="3" fill="#000"/>
<rect x="1271" y="0" width="1" height="15" fill="#000"/>
<rect x="1277" y="12" width="1" height="3" fill="#000"/>
<rect x="1283" y="12" width="1" height="3" fill="#000"/>
<rect x="1288" y="12" width="1" height="3" fill="#000"/>
<rect x="1294" y="12" width="1" height="3" fill="#000"/>
<rect x="1300" y="9" width="1" height="6" fill="#000"/>
<rect x="1306" y="12" width="1" height="3" fill="#000"/>
<rect x="1312" y="12" width="1" height="3" fill="#000"/>
<rect x="1318" y="12" width="1" height="3" fill="#000"/>
<rect x="1324" y="12" width="1" height="3" fill="#000"/>
<rect x="1330" y="0" width="1" height="15" fill="#000"/>
<rect x="1335" y="12" width="1" height="3" fill="#000"/>
<rect x="1341" y="12" width="1" height="3" fill="#000"/>
<rect x="1347" y="12" width="1" height="3" fill="#000"/>
<rect x="1353" y="12" width="1" height="3" fill="#000"/>
<rect x="1359" y="9" width="1" height="6" fill="#000"/>
<rect x="1365" y="12" width="1" height="3" fill="#000"/>
<rect x="1371" y="12" width="1" height="3" fill="#000"/>
<rect x="1376" y="12" width="1" height="3" fill="#000"/>
<rect x="1382" y="12" width="1" height="3" fill="#000"/>
<rect x="1388" y="0" width="1" height="15" fill="#000"/>
<rect x="1394" y="12" width="1" height="3" fill="#000"/>
<rect x="1400" y="12" width="1" height="3" fill="#000"/>
<rect x="1406" y="12" width="1" height="3" fill="#000"/>
<rect x="1412" y="12" width="1" height="3" fill="#000"/>
<rect x="1418" y="9" width="1" height="6" fill="#000"/>
<rect x="1423" y="12" width="1" height="3" fill="#000"/>
<rect x="1429" y="12" width="1" height="3" fill="#000"/>
<rect x="1435" y="12" width="1" height="3" fill="#000"/>
<rect x="1441" y="12" width="1" height="3" fill="#000"/>
<rect x="1447" y="0" width="1" height="15" fill="#000"/>
<rect x="1453" y="12" width="1" height="3" fill="#000"/>
<rect x="1459" y="12" width="1" height="3" fill="#000"/>
<rect x="1464" y="12" width="1" height="3" fill="#000"/>
<rect x="1470" y="12" width="1" height="3" fill="#000"/>
<rect x="1476" y="9" width="1" height="6" fill="#000"/>
<rect x="1482" y="12" width="1" height="3" fill="#000"/>
<rect x="1488" y="12" width="1" height="3" fill="#000"/>
<rect x="1494" y="12" width="1" height="3" fill="#000"/>
<rect x="1500" y="12" width="1" height="3" fill="#000"/>
<rect x="1506" y="0" width="1" height="15" fill="#000"/>
<rect x="1511" y="12" width="1" height="3" fill="#000"/>
<rect x="1517" y="12" width="1" height="3" fill="#000"/>
<rect x="1523" y="12" width="1" height="3" fill="#000"/>
<rect x="1529" y="12" width="1" height="3" fill="#000"/>
<rect x="1535" y="9" width="1" height="6" fill="#000"/>
<rect x="1541" y="12" width="1" height="3" fill="#000"/>
<rect x="1547" y="12" width="1" height="3" fill="#000"/>
<rect x="1553" y="12" width="1" height="3" fill="#000"/>
<rect x="1558" y="12" width="1" height="3" fill="#000"/>
<rect x="1564" y="0" width="1" height="15" fill="#000"/>
<rect x="1570" y="12" width="1" height="3" fill="#000"/>
<rect x="1576" y="12" width="1" height="3" fill="#000"/>
<rect x="1582" y="12" width="1" height="3" fill="#000"/>
<rect x="1588" y="12" width="1" height="3" fill="#000"/>
<rect x="1594" y="9" width="1" height="6" fill="#000"/>
<rect x="1599" y="12" width="1" height="3" fill="#000"/>
<rect x="1605" y="12" width="1" height="3" fill="#000"/>
<rect x="1611" y="12" width="1" height="3" fill="#000"/>
<rect x="1617" y="12" width="1" height="3" fill="#000"/>
</svg>
<span class="t" style="left:42px;top:1.5px;font-size:9.5px;letter-spacing:-0.5px;color:#000;-webkit-text-stroke:0.3px #111">80</span>
<span class="t" style="left:100px;top:1.5px;font-size:9.5px;letter-spacing:-0.5px;color:#000;-webkit-text-stroke:0.3px #111">70</span>
<span class="t" style="left:159px;top:1.5px;font-size:9.5px;letter-spacing:-0.5px;color:#000;-webkit-text-stroke:0.3px #111">60</span>
<span class="t" style="left:218px;top:1.5px;font-size:9.5px;letter-spacing:-0.5px;color:#000;-webkit-text-stroke:0.3px #111">50</span>
<span class="t" style="left:276px;top:1.5px;font-size:9.5px;letter-spacing:-0.5px;color:#000;-webkit-text-stroke:0.3px #111">40</span>
<span class="t" style="left:335px;top:1.5px;font-size:9.5px;letter-spacing:-0.5px;color:#000;-webkit-text-stroke:0.3px #111">30</span>
<span class="t" style="left:394px;top:1.5px;font-size:9.5px;letter-spacing:-0.5px;color:#000;-webkit-text-stroke:0.3px #111">20</span>
<span class="t" style="left:452px;top:1.5px;font-size:9.5px;letter-spacing:-0.5px;color:#000;-webkit-text-stroke:0.3px #111">10</span>
<span class="t" style="left:511px;top:1.5px;font-size:9.5px;letter-spacing:-0.5px;color:#000;-webkit-text-stroke:0.3px #111">0</span>
<span class="t" style="left:570px;top:1.5px;font-size:9.5px;letter-spacing:-0.5px;color:#000;-webkit-text-stroke:0.3px #111">10</span>
<span class="t" style="left:628px;top:1.5px;font-size:9.5px;letter-spacing:-0.5px;color:#000;-webkit-text-stroke:0.3px #111">20</span>
<span class="t" style="left:687px;top:1.5px;font-size:9.5px;letter-spacing:-0.5px;color:#000;-webkit-text-stroke:0.3px #111">30</span>
<span class="t" style="left:746px;top:1.5px;font-size:9.5px;letter-spacing:-0.5px;color:#000;-webkit-text-stroke:0.3px #111">40</span>
<span class="t" style="left:804px;top:1.5px;font-size:9.5px;letter-spacing:-0.5px;color:#000;-webkit-text-stroke:0.3px #111">50</span>
<span class="t" style="left:863px;top:1.5px;font-size:9.5px;letter-spacing:-0.5px;color:#000;-webkit-text-stroke:0.3px #111">60</span>
<span class="t" style="left:922px;top:1.5px;font-size:9.5px;letter-spacing:-0.5px;color:#000;-webkit-text-stroke:0.3px #111">70</span>
<span class="t" style="left:980px;top:1.5px;font-size:9.5px;letter-spacing:-0.5px;color:#000;-webkit-text-stroke:0.3px #111">80</span>
<span class="t" style="left:1039px;top:1.5px;font-size:9.5px;letter-spacing:-0.5px;color:#000;-webkit-text-stroke:0.3px #111">90</span>
<span class="t" style="left:1098px;top:1.5px;font-size:9.5px;letter-spacing:-0.5px;color:#000;-webkit-text-stroke:0.3px #111">100</span>
<span class="t" style="left:1156px;top:1.5px;font-size:9.5px;letter-spacing:-0.5px;color:#000;-webkit-text-stroke:0.3px #111">110</span>
<span class="t" style="left:1215px;top:1.5px;font-size:9.5px;letter-spacing:-0.5px;color:#000;-webkit-text-stroke:0.3px #111">120</span>
<span class="t" style="left:1274px;top:1.5px;font-size:9.5px;letter-spacing:-0.5px;color:#000;-webkit-text-stroke:0.3px #111">130</span>
<span class="t" style="left:1333px;top:1.5px;font-size:9.5px;letter-spacing:-0.5px;color:#000;-webkit-text-stroke:0.3px #111">140</span>
<span class="t" style="left:1391px;top:1.5px;font-size:9.5px;letter-spacing:-0.5px;color:#000;-webkit-text-stroke:0.3px #111">150</span>
<span class="t" style="left:1450px;top:1.5px;font-size:9.5px;letter-spacing:-0.5px;color:#000;-webkit-text-stroke:0.3px #111">160</span>
<span class="t" style="left:1509px;top:1.5px;font-size:9.5px;letter-spacing:-0.5px;color:#000;-webkit-text-stroke:0.3px #111">170</span>
<span class="t" style="left:1567px;top:1.5px;font-size:9.5px;letter-spacing:-0.5px;color:#000;-webkit-text-stroke:0.3px #111">180</span>
</div>
<div class="a" id="vruler" style="left:64px;top:105px;width:17px;height:914px;background:#fff;border-left:1px solid #000;border-right:1px solid #000;overflow:hidden">
<svg width="15" height="914" style="left:0;top:0" shape-rendering="crispEdges">
<rect x="12" y="4" width="3" height="1" fill="#000"/>
<rect x="12" y="10" width="3" height="1" fill="#000"/>
<rect x="12" y="16" width="3" height="1" fill="#000"/>
<rect x="0" y="22" width="15" height="1" fill="#000"/>
<rect x="12" y="28" width="3" height="1" fill="#000"/>
<rect x="12" y="34" width="3" height="1" fill="#000"/>
<rect x="12" y="40" width="3" height="1" fill="#000"/>
<rect x="12" y="45" width="3" height="1" fill="#000"/>
<rect x="9" y="51" width="6" height="1" fill="#000"/>
<rect x="12" y="57" width="3" height="1" fill="#000"/>
<rect x="12" y="63" width="3" height="1" fill="#000"/>
<rect x="12" y="69" width="3" height="1" fill="#000"/>
<rect x="12" y="75" width="3" height="1" fill="#000"/>
<rect x="0" y="81" width="15" height="1" fill="#000"/>
<rect x="12" y="87" width="3" height="1" fill="#000"/>
<rect x="12" y="92" width="3" height="1" fill="#000"/>
<rect x="12" y="98" width="3" height="1" fill="#000"/>
<rect x="12" y="104" width="3" height="1" fill="#000"/>
<rect x="9" y="110" width="6" height="1" fill="#000"/>
<rect x="12" y="116" width="3" height="1" fill="#000"/>
<rect x="12" y="122" width="3" height="1" fill="#000"/>
<rect x="12" y="128" width="3" height="1" fill="#000"/>
<rect x="12" y="133" width="3" height="1" fill="#000"/>
<rect x="0" y="139" width="15" height="1" fill="#000"/>
<rect x="12" y="145" width="3" height="1" fill="#000"/>
<rect x="12" y="151" width="3" height="1" fill="#000"/>
<rect x="12" y="157" width="3" height="1" fill="#000"/>
<rect x="12" y="163" width="3" height="1" fill="#000"/>
<rect x="9" y="169" width="6" height="1" fill="#000"/>
<rect x="12" y="175" width="3" height="1" fill="#000"/>
<rect x="12" y="180" width="3" height="1" fill="#000"/>
<rect x="12" y="186" width="3" height="1" fill="#000"/>
<rect x="12" y="192" width="3" height="1" fill="#000"/>
<rect x="0" y="198" width="15" height="1" fill="#000"/>
<rect x="12" y="204" width="3" height="1" fill="#000"/>
<rect x="12" y="210" width="3" height="1" fill="#000"/>
<rect x="12" y="216" width="3" height="1" fill="#000"/>
<rect x="12" y="222" width="3" height="1" fill="#000"/>
<rect x="9" y="227" width="6" height="1" fill="#000"/>
<rect x="12" y="233" width="3" height="1" fill="#000"/>
<rect x="12" y="239" width="3" height="1" fill="#000"/>
<rect x="12" y="245" width="3" height="1" fill="#000"/>
<rect x="12" y="251" width="3" height="1" fill="#000"/>
<rect x="0" y="257" width="15" height="1" fill="#000"/>
<rect x="12" y="263" width="3" height="1" fill="#000"/>
<rect x="12" y="268" width="3" height="1" fill="#000"/>
<rect x="12" y="274" width="3" height="1" fill="#000"/>
<rect x="12" y="280" width="3" height="1" fill="#000"/>
<rect x="9" y="286" width="6" height="1" fill="#000"/>
<rect x="12" y="292" width="3" height="1" fill="#000"/>
<rect x="12" y="298" width="3" height="1" fill="#000"/>
<rect x="12" y="304" width="3" height="1" fill="#000"/>
<rect x="12" y="310" width="3" height="1" fill="#000"/>
<rect x="0" y="315" width="15" height="1" fill="#000"/>
<rect x="12" y="321" width="3" height="1" fill="#000"/>
<rect x="12" y="327" width="3" height="1" fill="#000"/>
<rect x="12" y="333" width="3" height="1" fill="#000"/>
<rect x="12" y="339" width="3" height="1" fill="#000"/>
<rect x="9" y="345" width="6" height="1" fill="#000"/>
<rect x="12" y="351" width="3" height="1" fill="#000"/>
<rect x="12" y="356" width="3" height="1" fill="#000"/>
<rect x="12" y="362" width="3" height="1" fill="#000"/>
<rect x="12" y="368" width="3" height="1" fill="#000"/>
<rect x="0" y="374" width="15" height="1" fill="#000"/>
<rect x="12" y="380" width="3" height="1" fill="#000"/>
<rect x="12" y="386" width="3" height="1" fill="#000"/>
<rect x="12" y="392" width="3" height="1" fill="#000"/>
<rect x="12" y="398" width="3" height="1" fill="#000"/>
<rect x="9" y="403" width="6" height="1" fill="#000"/>
<rect x="12" y="409" width="3" height="1" fill="#000"/>
<rect x="12" y="415" width="3" height="1" fill="#000"/>
<rect x="12" y="421" width="3" height="1" fill="#000"/>
<rect x="12" y="427" width="3" height="1" fill="#000"/>
<rect x="0" y="433" width="15" height="1" fill="#000"/>
<rect x="12" y="439" width="3" height="1" fill="#000"/>
<rect x="12" y="444" width="3" height="1" fill="#000"/>
<rect x="12" y="450" width="3" height="1" fill="#000"/>
<rect x="12" y="456" width="3" height="1" fill="#000"/>
<rect x="9" y="462" width="6" height="1" fill="#000"/>
<rect x="12" y="468" width="3" height="1" fill="#000"/>
<rect x="12" y="474" width="3" height="1" fill="#000"/>
<rect x="12" y="480" width="3" height="1" fill="#000"/>
<rect x="12" y="486" width="3" height="1" fill="#000"/>
<rect x="0" y="491" width="15" height="1" fill="#000"/>
<rect x="12" y="497" width="3" height="1" fill="#000"/>
<rect x="12" y="503" width="3" height="1" fill="#000"/>
<rect x="12" y="509" width="3" height="1" fill="#000"/>
<rect x="12" y="515" width="3" height="1" fill="#000"/>
<rect x="9" y="521" width="6" height="1" fill="#000"/>
<rect x="12" y="527" width="3" height="1" fill="#000"/>
<rect x="12" y="533" width="3" height="1" fill="#000"/>
<rect x="12" y="538" width="3" height="1" fill="#000"/>
<rect x="12" y="544" width="3" height="1" fill="#000"/>
<rect x="0" y="550" width="15" height="1" fill="#000"/>
<rect x="12" y="556" width="3" height="1" fill="#000"/>
<rect x="12" y="562" width="3" height="1" fill="#000"/>
<rect x="12" y="568" width="3" height="1" fill="#000"/>
<rect x="12" y="574" width="3" height="1" fill="#000"/>
<rect x="9" y="579" width="6" height="1" fill="#000"/>
<rect x="12" y="585" width="3" height="1" fill="#000"/>
<rect x="12" y="591" width="3" height="1" fill="#000"/>
<rect x="12" y="597" width="3" height="1" fill="#000"/>
<rect x="12" y="603" width="3" height="1" fill="#000"/>
<rect x="0" y="609" width="15" height="1" fill="#000"/>
<rect x="12" y="615" width="3" height="1" fill="#000"/>
<rect x="12" y="621" width="3" height="1" fill="#000"/>
<rect x="12" y="626" width="3" height="1" fill="#000"/>
<rect x="12" y="632" width="3" height="1" fill="#000"/>
<rect x="9" y="638" width="6" height="1" fill="#000"/>
<rect x="12" y="644" width="3" height="1" fill="#000"/>
<rect x="12" y="650" width="3" height="1" fill="#000"/>
<rect x="12" y="656" width="3" height="1" fill="#000"/>
<rect x="12" y="662" width="3" height="1" fill="#000"/>
<rect x="0" y="667" width="15" height="1" fill="#000"/>
<rect x="12" y="673" width="3" height="1" fill="#000"/>
<rect x="12" y="679" width="3" height="1" fill="#000"/>
<rect x="12" y="685" width="3" height="1" fill="#000"/>
<rect x="12" y="691" width="3" height="1" fill="#000"/>
<rect x="9" y="697" width="6" height="1" fill="#000"/>
<rect x="12" y="703" width="3" height="1" fill="#000"/>
<rect x="12" y="709" width="3" height="1" fill="#000"/>
<rect x="12" y="714" width="3" height="1" fill="#000"/>
<rect x="12" y="720" width="3" height="1" fill="#000"/>
<rect x="0" y="726" width="15" height="1" fill="#000"/>
<rect x="12" y="732" width="3" height="1" fill="#000"/>
<rect x="12" y="738" width="3" height="1" fill="#000"/>
<rect x="12" y="744" width="3" height="1" fill="#000"/>
<rect x="12" y="750" width="3" height="1" fill="#000"/>
<rect x="9" y="756" width="6" height="1" fill="#000"/>
<rect x="12" y="761" width="3" height="1" fill="#000"/>
<rect x="12" y="767" width="3" height="1" fill="#000"/>
<rect x="12" y="773" width="3" height="1" fill="#000"/>
<rect x="12" y="779" width="3" height="1" fill="#000"/>
<rect x="0" y="785" width="15" height="1" fill="#000"/>
<rect x="12" y="791" width="3" height="1" fill="#000"/>
<rect x="12" y="797" width="3" height="1" fill="#000"/>
<rect x="12" y="802" width="3" height="1" fill="#000"/>
<rect x="12" y="808" width="3" height="1" fill="#000"/>
<rect x="9" y="814" width="6" height="1" fill="#000"/>
<rect x="12" y="820" width="3" height="1" fill="#000"/>
<rect x="12" y="826" width="3" height="1" fill="#000"/>
<rect x="12" y="832" width="3" height="1" fill="#000"/>
<rect x="12" y="838" width="3" height="1" fill="#000"/>
<rect x="0" y="844" width="15" height="1" fill="#000"/>
<rect x="12" y="849" width="3" height="1" fill="#000"/>
<rect x="12" y="855" width="3" height="1" fill="#000"/>
<rect x="12" y="861" width="3" height="1" fill="#000"/>
<rect x="12" y="867" width="3" height="1" fill="#000"/>
<rect x="9" y="873" width="6" height="1" fill="#000"/>
<rect x="12" y="879" width="3" height="1" fill="#000"/>
<rect x="12" y="885" width="3" height="1" fill="#000"/>
<rect x="12" y="890" width="3" height="1" fill="#000"/>
<rect x="12" y="896" width="3" height="1" fill="#000"/>
<rect x="0" y="902" width="15" height="1" fill="#000"/>
<rect x="12" y="908" width="3" height="1" fill="#000"/>
<rect x="1" y="4" width="1" height="1" fill="#444"/><rect x="3" y="4" width="1" height="1" fill="#444"/><rect x="5" y="4" width="1" height="1" fill="#444"/><rect x="7" y="4" width="1" height="1" fill="#444"/><rect x="9" y="4" width="1" height="1" fill="#444"/><rect x="11" y="4" width="1" height="1" fill="#444"/><rect x="13" y="4" width="1" height="1" fill="#444"/>
</svg>
<span class="t" style="left:1px;top:10px;font-size:9.5px;color:#000;-webkit-text-stroke:0.3px #111;width:8px;text-align:center">0</span>
<span class="t" style="left:1px;top:59px;font-size:9.5px;color:#000;-webkit-text-stroke:0.3px #111;width:8px;text-align:center">1</span>
<span class="t" style="left:1px;top:69px;font-size:9.5px;color:#000;-webkit-text-stroke:0.3px #111;width:8px;text-align:center">0</span>
<span class="t" style="left:1px;top:117px;font-size:9.5px;color:#000;-webkit-text-stroke:0.3px #111;width:8px;text-align:center">2</span>
<span class="t" style="left:1px;top:127px;font-size:9.5px;color:#000;-webkit-text-stroke:0.3px #111;width:8px;text-align:center">0</span>
<span class="t" style="left:1px;top:176px;font-size:9.5px;color:#000;-webkit-text-stroke:0.3px #111;width:8px;text-align:center">3</span>
<span class="t" style="left:1px;top:186px;font-size:9.5px;color:#000;-webkit-text-stroke:0.3px #111;width:8px;text-align:center">0</span>
<span class="t" style="left:1px;top:235px;font-size:9.5px;color:#000;-webkit-text-stroke:0.3px #111;width:8px;text-align:center">4</span>
<span class="t" style="left:1px;top:245px;font-size:9.5px;color:#000;-webkit-text-stroke:0.3px #111;width:8px;text-align:center">0</span>
<span class="t" style="left:1px;top:293px;font-size:9.5px;color:#000;-webkit-text-stroke:0.3px #111;width:8px;text-align:center">5</span>
<span class="t" style="left:1px;top:303px;font-size:9.5px;color:#000;-webkit-text-stroke:0.3px #111;width:8px;text-align:center">0</span>
<span class="t" style="left:1px;top:352px;font-size:9.5px;color:#000;-webkit-text-stroke:0.3px #111;width:8px;text-align:center">6</span>
<span class="t" style="left:1px;top:362px;font-size:9.5px;color:#000;-webkit-text-stroke:0.3px #111;width:8px;text-align:center">0</span>
<span class="t" style="left:1px;top:411px;font-size:9.5px;color:#000;-webkit-text-stroke:0.3px #111;width:8px;text-align:center">7</span>
<span class="t" style="left:1px;top:421px;font-size:9.5px;color:#000;-webkit-text-stroke:0.3px #111;width:8px;text-align:center">0</span>
<span class="t" style="left:1px;top:469px;font-size:9.5px;color:#000;-webkit-text-stroke:0.3px #111;width:8px;text-align:center">8</span>
<span class="t" style="left:1px;top:479px;font-size:9.5px;color:#000;-webkit-text-stroke:0.3px #111;width:8px;text-align:center">0</span>
<span class="t" style="left:1px;top:528px;font-size:9.5px;color:#000;-webkit-text-stroke:0.3px #111;width:8px;text-align:center">9</span>
<span class="t" style="left:1px;top:538px;font-size:9.5px;color:#000;-webkit-text-stroke:0.3px #111;width:8px;text-align:center">0</span>
<span class="t" style="left:1px;top:577px;font-size:9.5px;color:#000;-webkit-text-stroke:0.3px #111;width:8px;text-align:center">1</span>
<span class="t" style="left:1px;top:587px;font-size:9.5px;color:#000;-webkit-text-stroke:0.3px #111;width:8px;text-align:center">0</span>
<span class="t" style="left:1px;top:597px;font-size:9.5px;color:#000;-webkit-text-stroke:0.3px #111;width:8px;text-align:center">0</span>
<span class="t" style="left:1px;top:635px;font-size:9.5px;color:#000;-webkit-text-stroke:0.3px #111;width:8px;text-align:center">1</span>
<span class="t" style="left:1px;top:645px;font-size:9.5px;color:#000;-webkit-text-stroke:0.3px #111;width:8px;text-align:center">1</span>
<span class="t" style="left:1px;top:655px;font-size:9.5px;color:#000;-webkit-text-stroke:0.3px #111;width:8px;text-align:center">0</span>
<span class="t" style="left:1px;top:694px;font-size:9.5px;color:#000;-webkit-text-stroke:0.3px #111;width:8px;text-align:center">1</span>
<span class="t" style="left:1px;top:704px;font-size:9.5px;color:#000;-webkit-text-stroke:0.3px #111;width:8px;text-align:center">2</span>
<span class="t" style="left:1px;top:714px;font-size:9.5px;color:#000;-webkit-text-stroke:0.3px #111;width:8px;text-align:center">0</span>
<span class="t" style="left:1px;top:753px;font-size:9.5px;color:#000;-webkit-text-stroke:0.3px #111;width:8px;text-align:center">1</span>
<span class="t" style="left:1px;top:763px;font-size:9.5px;color:#000;-webkit-text-stroke:0.3px #111;width:8px;text-align:center">3</span>
<span class="t" style="left:1px;top:773px;font-size:9.5px;color:#000;-webkit-text-stroke:0.3px #111;width:8px;text-align:center">0</span>
<span class="t" style="left:1px;top:812px;font-size:9.5px;color:#000;-webkit-text-stroke:0.3px #111;width:8px;text-align:center">1</span>
<span class="t" style="left:1px;top:822px;font-size:9.5px;color:#000;-webkit-text-stroke:0.3px #111;width:8px;text-align:center">4</span>
<span class="t" style="left:1px;top:832px;font-size:9.5px;color:#000;-webkit-text-stroke:0.3px #111;width:8px;text-align:center">0</span>
<span class="t" style="left:1px;top:870px;font-size:9.5px;color:#000;-webkit-text-stroke:0.3px #111;width:8px;text-align:center">1</span>
<span class="t" style="left:1px;top:880px;font-size:9.5px;color:#000;-webkit-text-stroke:0.3px #111;width:8px;text-align:center">5</span>
<span class="t" style="left:1px;top:890px;font-size:9.5px;color:#000;-webkit-text-stroke:0.3px #111;width:8px;text-align:center">0</span>
</div>
<div class="a" id="art" style="left:0;top:0;width:1920px;height:1040px;pointer-events:none">
<div class="a" style="left:562px;top:116px;width:641px;height:893px;background:#e05a20;border:1px solid #d0242a"></div>
<div class="a" style="left:574px;top:128px;width:617px;height:869px;background:#c5c5c5"></div>
<div class="a" style="left:591px;top:391px;width:581px;height:587px;background:#fff"></div>
<svg width="1920" height="1040" style="left:0;top:0" shape-rendering="crispEdges">
<rect x="602" y="391" width="1" height="558" fill="#d0d0d0"/>
<rect x="631" y="391" width="1" height="558" fill="#d0d0d0"/>
<rect x="661" y="391" width="1" height="558" fill="#d0d0d0"/>
<rect x="690" y="391" width="1" height="558" fill="#d0d0d0"/>
<rect x="719" y="391" width="1" height="558" fill="#d0d0d0"/>
<rect x="749" y="391" width="1" height="558" fill="#d0d0d0"/>
<rect x="778" y="391" width="1" height="558" fill="#d0d0d0"/>
<rect x="807" y="391" width="1" height="558" fill="#d0d0d0"/>
<rect x="837" y="391" width="1" height="558" fill="#d0d0d0"/>
<rect x="866" y="391" width="1" height="558" fill="#d0d0d0"/>
<rect x="896" y="391" width="1" height="558" fill="#d0d0d0"/>
<rect x="925" y="391" width="1" height="558" fill="#d0d0d0"/>
<rect x="954" y="391" width="1" height="558" fill="#d0d0d0"/>
<rect x="984" y="391" width="1" height="558" fill="#d0d0d0"/>
<rect x="1013" y="391" width="1" height="558" fill="#d0d0d0"/>
<rect x="1042" y="391" width="1" height="558" fill="#d0d0d0"/>
<rect x="1072" y="391" width="1" height="558" fill="#d0d0d0"/>
<rect x="1101" y="391" width="1" height="558" fill="#d0d0d0"/>
<rect x="1130" y="391" width="1" height="558" fill="#d0d0d0"/>
<rect x="1160" y="391" width="1" height="558" fill="#d0d0d0"/>
<rect x="602" y="420" width="558" height="1" fill="#d0d0d0"/>
<rect x="602" y="449" width="558" height="1" fill="#d0d0d0"/>
<rect x="602" y="479" width="558" height="1" fill="#d0d0d0"/>
<rect x="602" y="508" width="558" height="1" fill="#d0d0d0"/>
<rect x="602" y="537" width="558" height="1" fill="#d0d0d0"/>
<rect x="602" y="567" width="558" height="1" fill="#d0d0d0"/>
<rect x="602" y="596" width="558" height="1" fill="#d0d0d0"/>
<rect x="602" y="625" width="558" height="1" fill="#d0d0d0"/>
<rect x="602" y="655" width="558" height="1" fill="#d0d0d0"/>
<rect x="602" y="684" width="558" height="1" fill="#d0d0d0"/>
<rect x="602" y="713" width="558" height="1" fill="#d0d0d0"/>
<rect x="602" y="743" width="558" height="1" fill="#d0d0d0"/>
<rect x="602" y="772" width="558" height="1" fill="#d0d0d0"/>
<rect x="602" y="801" width="558" height="1" fill="#d0d0d0"/>
<rect x="602" y="831" width="558" height="1" fill="#d0d0d0"/>
<rect x="602" y="860" width="558" height="1" fill="#d0d0d0"/>
<rect x="602" y="889" width="558" height="1" fill="#d0d0d0"/>
<rect x="602" y="919" width="558" height="1" fill="#d0d0d0"/>
<rect x="602" y="948" width="558" height="1" fill="#d0d0d0"/>
</svg>
<div class="a" style="left:563px;top:117px;width:639px;height:275px;background:#76778a"></div>
<div class="a" style="left:574px;top:128px;width:617px;height:869px;border:1px solid #000"></div>
<svg width="1920" height="1040" style="left:0;top:0" shape-rendering="crispEdges">
<rect x="563" y="943" width="639" height="1" fill="#000"/>
<rect x="562" y="933" width="2" height="21" fill="#111"/>
<rect x="1200" y="933" width="2" height="21" fill="#111"/>
<rect x="575" y="972" width="615" height="1" fill="#000"/>
<rect x="574" y="962" width="2" height="21" fill="#111"/>
<rect x="1188" y="962" width="2" height="21" fill="#111"/>
<rect x="1136" y="392" width="1" height="615" fill="#000"/>
<rect x="1126" y="1006" width="21" height="2" fill="#111"/>
<rect x="1166" y="392" width="1" height="604" fill="#555"/>
<rect x="1156" y="994" width="20" height="2" fill="#111"/>
</svg>
<span class="t" style="left:847px;top:921px;font-size:20px;color:#111;letter-spacing:-0.2px">109 mm</span>
<span class="t" style="left:847px;top:950px;font-size:20px;color:#111;letter-spacing:-0.2px">105 mm</span>
<span class="t" style="left:1114px;top:598px;font-size:20px;color:#111;letter-spacing:-0.2px;transform:rotate(-90deg);transform-origin:0 0">152 mm</span>
<span class="t" style="left:1143px;top:598px;font-size:20px;color:#111;letter-spacing:-0.2px;transform:rotate(-90deg);transform-origin:0 0">148 mm</span>
<div class="a" style="left:738px;top:230px;width:19px;height:59px;background:#a8bd22"></div>
<div class="a" style="left:664px;top:230px;width:65px;height:60px;background:#a8bd22;border:1px solid #1e8a3c"></div>
<div class="a" style="left:695px;top:258px;width:3px;height:3px;background:#128a3c"></div>
<div class="a" style="left:662px;top:228px;width:5px;height:5px;background:#fff;border:1px solid #3a9a50"></div>
<div class="a" style="left:662px;top:258px;width:5px;height:5px;background:#fff;border:1px solid #3a9a50"></div>
<div class="a" style="left:662px;top:287px;width:5px;height:5px;background:#fff;border:1px solid #3a9a50"></div>
<div class="a" style="left:694px;top:228px;width:5px;height:5px;background:#fff;border:1px solid #3a9a50"></div>
<div class="a" style="left:694px;top:287px;width:5px;height:5px;background:#fff;border:1px solid #3a9a50"></div>
<div class="a" style="left:726px;top:228px;width:5px;height:5px;background:#fff;border:1px solid #3a9a50"></div>
<div class="a" style="left:726px;top:258px;width:5px;height:5px;background:#fff;border:1px solid #3a9a50"></div>
<div class="a" style="left:726px;top:287px;width:5px;height:5px;background:#fff;border:1px solid #3a9a50"></div>
</div>
<div class="a" id="vscroll" style="left:1685px;top:88px;width:15px;height:931px;background:#f0f0f0"></div>
<svg width="15" height="10" style="left:1685px;top:94px"><path d="M4 6 L7.500 2.500 L11 6" fill="none" stroke="#555" stroke-width="1.800"/></svg>
<svg width="15" height="10" style="left:1685px;top:1004px"><path d="M4 3 L11 3 L7.500 7 Z" fill="#555"/></svg>
<div class="a" style="left:1686px;top:546px;width:13px;height:14px;background:linear-gradient(90deg,#fafafa,#d8d8d8);border:1px solid #aaa;border-radius:1px"></div>
<div class="a" style="left:1700px;top:68px;width:1px;height:967px;background:#333"></div><div class="a" style="left:1701px;top:68px;width:214px;height:967px;background:#d6d6d6"></div>
<div class="a" style="left:1701px;top:68px;width:214px;height:13px;background:linear-gradient(#585858,#303030);border-top:1px solid #333;border-bottom:1px solid #1c1c1c"></div>
<svg width="10" height="8" viewBox="0 0 10 8" style="left:1903px;top:71px" ><path d="M0.500 0.500 v6 l4 -3 z M5 0.500 v6 l4 -3 z" fill="#e8e8e8"/></svg>
<div class="a" style="left:1915px;top:36px;width:1px;height:999px;background:#4e4e4e"></div>
<div class="a" style="left:1701px;top:81px;width:214px;height:17px;background:linear-gradient(#9d9d9d,#8a8a8a);border-bottom:1px solid #6e6e6e"></div><div class="a" style="left:1701px;top:81px;width:49px;height:17px;background:linear-gradient(#e6e6e6,#d6d6d6);border-right:1px solid #777"></div><svg width="8" height="10" viewBox="0 0 8 10" style="left:1704px;top:85px" ><path d="M1.500 4 L4 1.500 L6.500 4 M1.500 6 L4 8.500 L6.500 6" fill="none" stroke="#222" stroke-width="1.400"/></svg><span class="t " style="left:1713px;top:85px;font-size:10px;color:#262626;font-weight:bold;letter-spacing:-0.2px">Farbe</span><div class="a" style="left:1750px;top:81px;width:61px;height:17px;border-right:1px solid #6a6a6a;box-shadow:inset 1px 0 0 #a8a8a8"></div><span class="t " style="left:1757px;top:85px;font-size:10px;color:#262626;font-weight:bold;letter-spacing:-0.2px;text-shadow:0 1px 0 #b0b0b0">Farbfelder</span><div class="a" style="left:1811px;top:81px;width:57px;height:17px;border-right:1px solid #6a6a6a;box-shadow:inset 1px 0 0 #a8a8a8"></div><span class="t " style="left:1818px;top:85px;font-size:10px;color:#262626;font-weight:bold;letter-spacing:-0.2px;text-shadow:0 1px 0 #b0b0b0">Farbhilfe</span><svg width="16" height="10" viewBox="0 0 16 10" style="left:1897px;top:85px" shape-rendering="crispEdges"><path d="M0 1.500 h4 l-2 2.500 z" fill="#222"/><path d="M5 1.500 h10 M5 4.500 h10 M5 7.500 h10" stroke="#222" stroke-width="1.200"/></svg>
<svg width="19" height="19" viewBox="0 0 19 19" style="left:1714px;top:114px" ><rect x="0.600" y="0.600" width="17.800" height="17.800" fill="#fff" stroke="#111" stroke-width="1.200"/><rect x="5.500" y="5.500" width="8" height="8" fill="#ddd" stroke="#111" stroke-width="1.200"/><path d="M1.500 17.500 L17.500 1.500" stroke="#d0102a" stroke-width="1.800"/></svg>
<div class="a" style="left:1705px;top:105px;width:19px;height:19px;background:#a8bd22;border:1px solid #111;box-shadow:inset 0 0 0 1px #e8f0a0"></div>
<svg width="13" height="13" viewBox="0 0 13 13" style="left:1705px;top:138px" ><path d="M6.500 1 L12 3.500 V9.500 L6.500 12 L1 9.500 V3.500 Z" fill="#f4f4f4" stroke="#222" stroke-width="1.100"/><path d="M1 3.500 L6.500 6 L12 3.500 M6.500 6 V12" fill="none" stroke="#222" stroke-width="1.100"/><path d="M1 3.500 L6.500 6 V12 L1 9.500 Z" fill="#999"/></svg>
<div class="a" style="left:1721px;top:138px;width:13px;height:13px;background:#8cc832;border:1px solid #4a8a1a"></div>
<span class="t " style="left:1744px;top:104px;font-size:10.5px;color:#111;">C</span>
<div class="a" style="left:1757px;top:106px;width:101px;height:6px;background:linear-gradient(90deg,#f7e01e,#c6cc2c 40%,#5fae46 75%,#0a9a50);border:1px solid #111"></div>
<svg width="10" height="6" viewBox="0 0 10 6" style="left:1791px;top:112px" ><path d="M1 5.500 L5 0.800 L9 5.500 Z" fill="#e8e8e8" stroke="#8a8a8a" stroke-width="1"/></svg>
<div class="a" style="left:1864px;top:101px;width:33px;height:17px;background:#fff"></div>
<span class="t " style="left:1869px;top:105px;font-size:10px;color:#111;letter-spacing:-0.1px">38,93</span>
<span class="t " style="left:1900px;top:105px;font-size:10px;color:#111;">%</span>
<span class="t " style="left:1744px;top:122px;font-size:10.5px;color:#111;">M</span>
<div class="a" style="left:1757px;top:124px;width:101px;height:6px;background:linear-gradient(90deg,#a6c41c,#b09a2c 40%,#b8602e 75%,#b83a2c);border:1px solid #111"></div>
<svg width="10" height="6" viewBox="0 0 10 6" style="left:1764px;top:130px" ><path d="M1 5.500 L5 0.800 L9 5.500 Z" fill="#e8e8e8" stroke="#8a8a8a" stroke-width="1"/></svg>
<div class="a" style="left:1864px;top:119px;width:33px;height:17px;background:#fff"></div>
<span class="t " style="left:1869px;top:123px;font-size:10px;color:#111;letter-spacing:-0.1px">12,04</span>
<span class="t " style="left:1900px;top:123px;font-size:10px;color:#111;">%</span>
<span class="t " style="left:1744px;top:140px;font-size:10.5px;color:#111;">Y</span>
<div class="a" style="left:1757px;top:142px;width:101px;height:6px;background:linear-gradient(90deg,#a8c8ee,#a8cca8 40%,#a8c460 75%,#a8bd22);border:1px solid #111"></div>
<svg width="10" height="6" viewBox="0 0 10 6" style="left:1849px;top:148px" ><path d="M1 5.500 L5 0.800 L9 5.500 Z" fill="#e8e8e8" stroke="#8a8a8a" stroke-width="1"/></svg>
<div class="a" style="left:1864px;top:137px;width:33px;height:17px;background:#fff"></div>
<span class="t " style="left:1869px;top:141px;font-size:10px;color:#111;letter-spacing:-0.1px">96,63</span>
<span class="t " style="left:1900px;top:141px;font-size:10px;color:#111;">%</span>
<span class="t " style="left:1744px;top:158px;font-size:10.5px;color:#111;">K</span>
<div class="a" style="left:1757px;top:160px;width:101px;height:6px;background:linear-gradient(90deg,#a8bd22,#788a1c 40%,#3c4a12 75%,#10140a);border:1px solid #111"></div>
<svg width="10" height="6" viewBox="0 0 10 6" style="left:1753px;top:166px" ><path d="M1 5.500 L5 0.800 L9 5.500 Z" fill="#e8e8e8" stroke="#8a8a8a" stroke-width="1"/></svg>
<div class="a" style="left:1864px;top:155px;width:33px;height:17px;background:#fff"></div>
<span class="t " style="left:1869px;top:159px;font-size:10px;color:#111;letter-spacing:-0.1px">0,92</span>
<span class="t " style="left:1900px;top:159px;font-size:10px;color:#111;">%</span>
<div class="a" style="left:1706px;top:174px;width:200px;height:17px;background:#000"></div>
<div class="a" style="left:1723px;top:175px;width:167px;height:15px;background:linear-gradient(180deg,rgba(255,255,255,.95) 0%,rgba(255,255,255,0) 45%,rgba(0,0,0,0) 55%,rgba(0,0,0,.95) 100%),linear-gradient(90deg,#e8262a 0%,#f08a1e 8%,#f6e81e 16%,#7ab82a 27%,#1e9a46 38%,#2ab4e0 53%,#2a52a8 66%,#5a2e90 76%,#9a2a8c 84%,#e8208a 93%,#e8262a 100%)"></div>
<div class="a" style="left:1890px;top:175px;width:15px;height:7px;background:#fff"></div>
<svg width="17" height="17" viewBox="0 0 17 17" style="left:1706px;top:174px" ><rect x="0.600" y="0.600" width="15.8" height="15.8" fill="#fff" stroke="#111" stroke-width="1.2"/><path d="M1.500 15.5 L15.5 1.500" stroke="#d0102a" stroke-width="1.800"/></svg>
<div class="a" style="left:1701px;top:199px;width:214px;height:3px;background:#3c3c3c"></div>
<div class="a" style="left:1701px;top:202px;width:214px;height:17px;background:linear-gradient(#9d9d9d,#8a8a8a);border-bottom:1px solid #6e6e6e"></div><div class="a" style="left:1701px;top:202px;width:41px;height:17px;background:linear-gradient(#e6e6e6,#d6d6d6);border-right:1px solid #777"></div><span class="t " style="left:1708px;top:206px;font-size:10px;color:#262626;font-weight:bold;letter-spacing:-0.2px">Pinsel</span><div class="a" style="left:1742px;top:202px;width:55px;height:17px;border-right:1px solid #6a6a6a;box-shadow:inset 1px 0 0 #a8a8a8"></div><span class="t " style="left:1749px;top:206px;font-size:10px;color:#262626;font-weight:bold;letter-spacing:-0.2px;text-shadow:0 1px 0 #b0b0b0">Symbole</span><div class="a" style="left:1797px;top:202px;width:64px;height:17px;border-right:1px solid #6a6a6a;box-shadow:inset 1px 0 0 #a8a8a8"></div><span class="t " style="left:1804px;top:206px;font-size:10px;color:#262626;font-weight:bold;letter-spacing:-0.2px;text-shadow:0 1px 0 #b0b0b0">Grafikstile</span><svg width="16" height="10" viewBox="0 0 16 10" style="left:1897px;top:206px" shape-rendering="crispEdges"><path d="M0 1.500 h4 l-2 2.500 z" fill="#222"/><path d="M5 1.500 h10 M5 4.500 h10 M5 7.500 h10" stroke="#222" stroke-width="1.200"/></svg>
<div class="a" style="left:1703px;top:220px;width:195px;height:215px;background:#fff"></div>
<div class="a" style="left:1703px;top:220px;width:192px;height:33px;border:1px solid #111"></div>
<div class="a" style="left:1735px;top:220px;width:1px;height:33px;background:#111"></div>
<div class="a" style="left:1767px;top:220px;width:1px;height:33px;background:#111"></div>
<div class="a" style="left:1799px;top:220px;width:1px;height:33px;background:#111"></div>
<div class="a" style="left:1831px;top:220px;width:1px;height:33px;background:#111"></div>
<div class="a" style="left:1863px;top:220px;width:1px;height:33px;background:#111"></div>
<svg width="192" height="33" viewBox="0 0 192 33" style="left:1703px;top:220px" ><rect x="14" y="15.500" width="3" height="1" fill="#333"/><ellipse cx="47.500" cy="16" rx="3" ry="1.600" fill="#111" transform="rotate(20 47.500 16)"/><rect x="79" y="13" width="1" height="6" fill="#bbb"/><circle cx="111.500" cy="16" r="1.400" fill="#111"/><circle cx="143.500" cy="16" r="3.600" fill="#111"/><circle cx="175.500" cy="16" r="7.600" fill="#000"/></svg>
<div class="a" style="left:1703px;top:284px;width:195px;height:1px;background:#111"></div>
<div class="a" style="left:1703px;top:316px;width:195px;height:1px;background:#111"></div>
<div class="a" style="left:1703px;top:348px;width:195px;height:1px;background:#111"></div>
<div class="a" style="left:1703px;top:380px;width:195px;height:1px;background:#111"></div>
<div class="a" style="left:1703px;top:412px;width:195px;height:1px;background:#111"></div>
<div class="a" style="left:1703px;top:434px;width:195px;height:1px;background:#111"></div>
<div class="a" style="left:1709px;top:267px;width:148px;height:3px;background:#000;border-radius:1px"></div>
<span class="t " style="left:1863px;top:264px;font-size:10px;color:#111;letter-spacing:-0.15px">Einfach</span>
<svg width="195" height="31" viewBox="0 0 195 31" style="left:1703px;top:285px" ><path d="M7 15 L20 14.300 L34 14.600 L52 13.800 L75 13.600 L98 13.200 L116 13.600 L128 12.800 L150 13.400 L168 13 L190 14 L172 15.200 L150 15.400 L131 15 L117 15.900 L98 15.600 L76 16.200 L60 16.600 L44 16.300 L34 17.200 L24 16.400 Z" fill="#000"/></svg>
<svg width="195" height="31" viewBox="0 0 195 31" style="left:1703px;top:317px" ><path d="M6 15.500 Q20 12 30 11.500 H170 Q180 12 190 15.500 Q180 19 170 19.500 H30 Q20 19 6 15.500 Z" fill="#000"/></svg>
<svg width="195" height="31" viewBox="0 0 195 31" style="left:1703px;top:349px" ><path d="M6 15.500 Q40 12 92 13 Q118 14 122 12.500 Q112 9.500 118 8.500 Q124 7.500 128 11 Q150 4 166 5.500 Q164 9 172 8.500 Q186 8 190 19.500 Q182 15 164 15 Q140 16 128 17.500 Q122 19.500 118 21.500 Q110 20 104 17.500 Q100 18.500 96 17 Q92 15 70 14.500 Q30 15.500 8 17 Z" fill="#000"/></svg>
<svg width="195" height="31" viewBox="0 0 195 31" style="left:1702px;top:381px" ><rect x="32" y="0" width="1" height="4" fill="#111"/><rect x="32" y="27" width="1" height="4" fill="#111"/><rect x="64" y="0" width="1" height="4" fill="#111"/><rect x="64" y="27" width="1" height="4" fill="#111"/><rect x="96" y="0" width="1" height="4" fill="#111"/><rect x="96" y="27" width="1" height="4" fill="#111"/><rect x="128" y="0" width="1" height="4" fill="#111"/><rect x="128" y="27" width="1" height="4" fill="#111"/><rect x="160" y="0" width="1" height="4" fill="#111"/><rect x="160" y="27" width="1" height="4" fill="#111"/><path d="M12 31 V16 Q12 13 15 13 H30 V19 H18 V31 Z" fill="#c8141e" stroke="#111" stroke-width="1"/><rect x="32.500" y="13" width="30" height="6" fill="#c8141e" stroke="#111" stroke-width="1"/><rect x="64.500" y="13" width="30" height="6" fill="#c8141e" stroke="#111" stroke-width="1"/><path d="M97 15 H110 V0 H115 V17 Q115 21 111 21 H97 Z" fill="#c8141e" stroke="#111" stroke-width="1"/><path d="M128 13 H169 V4.500 L190 16 L169 27.500 V19 H128 Z" fill="#c8141e" stroke="#111" stroke-width="1"/><rect x="63.500" y="12" width="1" height="8" fill="#fff"/><rect x="159" y="12" width="1" height="8" fill="#fff"/></svg>
<svg width="195" height="21" viewBox="0 0 195 21" style="left:1703px;top:413px" ><rect x="31" y="0" width="1" height="3" fill="#111"/><rect x="63" y="0" width="1" height="3" fill="#111"/><rect x="95" y="0" width="1" height="3" fill="#111"/><rect x="127" y="0" width="1" height="3" fill="#111"/><rect x="159" y="0" width="1" height="3" fill="#111"/><circle cx="6" cy="5" r="3.5" fill="none" stroke="#3c3c50" stroke-width="1.300"/><circle cx="13" cy="6" r="4" fill="none" stroke="#3c3c50" stroke-width="1.300"/><circle cx="20" cy="5" r="3.5" fill="none" stroke="#3c3c50" stroke-width="1.300"/><circle cx="7" cy="13" r="4" fill="none" stroke="#3c3c50" stroke-width="1.300"/><circle cx="15" cy="14" r="4.5" fill="none" stroke="#3c3c50" stroke-width="1.300"/><circle cx="22" cy="13" r="3.5" fill="none" stroke="#3c3c50" stroke-width="1.300"/><circle cx="11" cy="10" r="3" fill="none" stroke="#3c3c50" stroke-width="1.300"/><circle cx="18" cy="10" r="3" fill="none" stroke="#3c3c50" stroke-width="1.300"/><path d="M3 2 L23 18 M23 2 L3 18 M13 1 V19" stroke="#3c3c50" stroke-width="1.200"/><circle cx="106" cy="5" r="3.5" fill="none" stroke="#3c3c50" stroke-width="1.300"/><circle cx="113" cy="6" r="4" fill="none" stroke="#3c3c50" stroke-width="1.300"/><circle cx="120" cy="5" r="3.5" fill="none" stroke="#3c3c50" stroke-width="1.300"/><circle cx="107" cy="13" r="4" fill="none" stroke="#3c3c50" stroke-width="1.300"/><circle cx="115" cy="14" r="4.5" fill="none" stroke="#3c3c50" stroke-width="1.300"/><circle cx="122" cy="13" r="3.5" fill="none" stroke="#3c3c50" stroke-width="1.300"/><circle cx="111" cy="10" r="3" fill="none" stroke="#3c3c50" stroke-width="1.300"/><circle cx="118" cy="10" r="3" fill="none" stroke="#3c3c50" stroke-width="1.300"/><path d="M103 2 L123 18 M123 2 L103 18 M113 1 V19" stroke="#3c3c50" stroke-width="1.200"/><path d="M25 10.500 H100 M25 15.500 H100" stroke="#666" stroke-width="1"/><path d="M36 15.500 l6 -2 l6 2 l-6 2 z M52 15.500 l5 -1.500 l5 1.500 l-5 1.500 z M68 15.500 l6 -2 l6 2 l-6 2 z M84 15.500 l5 -1.500 l5 1.500 l-5 1.500 z" fill="#5a6a4a"/></svg>
<div class="a" style="left:1898px;top:220px;width:14px;height:215px;background:#f2f2f2"></div><svg width="14" height="8" viewBox="0 0 14 8" style="left:1898px;top:226px" ><path d="M4 5.500 L7 2.500 L10 5.500" fill="none" stroke="#777" stroke-width="1.700"/></svg><svg width="14" height="8" viewBox="0 0 14 8" style="left:1898px;top:423px" ><path d="M3.500 2 h7 l-3.500 4 z" fill="#777"/></svg><div class="a" style="left:1898px;top:239px;width:14px;height:15px;background:linear-gradient(90deg,#f4f4f4,#c8c8c8);border:1px solid #aaa"></div>
<div class="a" style="left:1701px;top:435px;width:214px;height:17px;background:linear-gradient(#dcdcdc,#d0d0d0)"></div>
<svg width="20" height="14" viewBox="0 0 20 14" style="left:1711px;top:436px" ><rect x="1.500" y="1.500" width="9" height="9" fill="#eee" stroke="#333"/><rect x="4.500" y="4.500" width="9" height="9" fill="#ddd" stroke="#333"/><path d="M7.500 4.500 v9 M10.500 4.500 v9 M4.500 7.500 h9 M4.500 10.500 h9" stroke="#555"/><path d="M18 13 h-3 l3 -3 z" fill="#111"/></svg>
<svg width="12" height="12" viewBox="0 0 12 12" style="left:1779px;top:437px" ><path d="M1 1 Q6 6 11 11 M11 1 Q6 6 1 11" stroke="#aaa" stroke-width="2" fill="none"/></svg>
<svg width="24" height="12" viewBox="0 0 24 12" style="left:1805px;top:437px" ><path d="M9 1 L2 9" stroke="#aaa" stroke-width="2"/><path d="M11 4 h11 M11 7 h11 M11 10 h11" stroke="#aaa" stroke-width="1.200"/></svg>
<svg width="12" height="12" viewBox="0 0 12 12" style="left:1847px;top:437px" ><path d="M1.500 1.500 h9 v9 h-9 z" fill="#f2f2f2" stroke="#333" stroke-width="1"/><path d="M5.500 6 h5 v5 h-5 z" fill="#fff" stroke="#333" stroke-width="1.200"/></svg>
<svg width="10" height="13" viewBox="0 0 10 13" style="left:1879px;top:436px" ><path d="M1 3.500 h8 M3.500 1.500 h3 v2" fill="none" stroke="#555" stroke-width="1.200"/><path d="M1.500 4.500 h7 l-0.700 8 h-5.600 z" fill="#e0e0e0" stroke="#555" stroke-width="1.100"/><path d="M3.800 6 v5 M6.200 6 v5" stroke="#555"/></svg>
<svg width="10" height="10" viewBox="0 0 10 10" style="left:1903px;top:441px" shape-rendering="crispEdges"><rect x="8" y="8" width="1" height="1" fill="#9a9a9a"/><rect x="8" y="6" width="1" height="1" fill="#9a9a9a"/><rect x="8" y="4" width="1" height="1" fill="#9a9a9a"/><rect x="8" y="2" width="1" height="1" fill="#9a9a9a"/><rect x="6" y="8" width="1" height="1" fill="#9a9a9a"/><rect x="6" y="6" width="1" height="1" fill="#9a9a9a"/><rect x="6" y="4" width="1" height="1" fill="#9a9a9a"/><rect x="4" y="8" width="1" height="1" fill="#9a9a9a"/><rect x="4" y="6" width="1" height="1" fill="#9a9a9a"/><rect x="2" y="8" width="1" height="1" fill="#9a9a9a"/></svg>
<div class="a" style="left:1701px;top:452px;width:214px;height:3px;background:#3c3c3c"></div>
<div class="a" style="left:1701px;top:455px;width:214px;height:17px;background:linear-gradient(#9d9d9d,#8a8a8a);border-bottom:1px solid #6e6e6e"></div><div class="a" style="left:1701px;top:455px;width:47px;height:17px;background:linear-gradient(#e6e6e6,#d6d6d6);border-right:1px solid #777"></div><span class="t " style="left:1708px;top:459px;font-size:10px;color:#262626;font-weight:bold;letter-spacing:-0.2px">Ebenen</span><div class="a" style="left:1748px;top:455px;width:50px;height:17px;border-right:1px solid #6a6a6a;box-shadow:inset 1px 0 0 #a8a8a8"></div><span class="t " style="left:1755px;top:459px;font-size:10px;color:#262626;font-weight:bold;letter-spacing:-0.2px;text-shadow:0 1px 0 #b0b0b0">Zeichen</span><div class="a" style="left:1798px;top:455px;width:46px;height:17px;border-right:1px solid #6a6a6a;box-shadow:inset 1px 0 0 #a8a8a8"></div><span class="t " style="left:1805px;top:459px;font-size:10px;color:#262626;font-weight:bold;letter-spacing:-0.2px;text-shadow:0 1px 0 #b0b0b0">Absatz</span><svg width="16" height="10" viewBox="0 0 16 10" style="left:1897px;top:459px" shape-rendering="crispEdges"><path d="M0 1.500 h4 l-2 2.500 z" fill="#222"/><path d="M5 1.500 h10 M5 4.500 h10 M5 7.500 h10" stroke="#222" stroke-width="1.200"/></svg>
<div class="a" style="left:1703px;top:473px;width:194px;height:1px;background:#111"></div>
<div class="a" style="left:1703px;top:474px;width:194px;height:39px;background:#dcdcdc"></div>
<div class="a" style="left:1763px;top:474px;width:134px;height:20px;background:#3a96ee"></div>
<div class="a" style="left:1703px;top:513px;width:194px;height:1px;background:#111"></div>
<div class="a" style="left:1747px;top:474px;width:1px;height:39px;background:#111"></div>
<svg width="16" height="16" viewBox="0 0 16 16" style="left:1704px;top:476px" ><rect x="0.500" y="0.500" width="15" height="15" fill="#dedede" stroke="#f2f2f2"/><path d="M2 8 q6 -6.500 12 0 q-6 6 -12 0 z" fill="#555" opacity="1"/><circle cx="8" cy="8" r="2.600" fill="#111" opacity="1"/><circle cx="7" cy="7" r="1" fill="#ccc" opacity="1"/><path d="M1.500 7 q6.500 -7 13 0" fill="none" stroke="#333" stroke-width="1.200" opacity="1"/></svg>
<div class="a" style="left:1722px;top:476px;width:15px;height:16px;background:#e0e0e0;border:1px solid #f2f2f2"></div>
<div class="a" style="left:1739px;top:476px;width:4px;height:15px;background:#12a050"></div>
<svg width="8" height="12" viewBox="0 0 8 12" style="left:1751px;top:478px" ><path d="M1.500 1 L6.500 6 L1.500 11 Z" fill="#e8e8e8" stroke="#7a7a7a" stroke-width="1.200"/></svg>
<svg width="16" height="16" viewBox="0 0 16 16" style="left:1765px;top:476px" ><rect x="0.800" y="0.800" width="14.400" height="14.400" fill="#e4e4e8" stroke="#10204a" stroke-width="1.600"/><rect x="2" y="2" width="12" height="4" fill="#76778a"/></svg>
<span class="t " style="left:1786px;top:479px;font-size:10.5px;color:#fff;font-weight:bold;letter-spacing:-0.2px">Meine Ebene</span>
<svg width="14" height="14" viewBox="0 0 14 14" style="left:1872px;top:477px" ><circle cx="7" cy="7" r="4.200" fill="none" stroke="#1a5ab8" stroke-width="1.300"/></svg>
<div class="a" style="left:1888px;top:482px;width:5px;height:5px;background:#12a050;border-radius:1px"></div>
<svg width="8" height="6" viewBox="0 0 8 6" style="left:1889px;top:474px" ><path d="M0 0 h8 v6 z" fill="#10204a"/></svg>
<svg width="16" height="16" viewBox="0 0 16 16" style="left:1704px;top:496px" ><rect x="0.500" y="0.500" width="15" height="15" fill="#dedede" stroke="#f2f2f2"/><path d="M2 8 q6 -6.500 12 0 q-6 6 -12 0 z" fill="#555" opacity="1"/><circle cx="8" cy="8" r="2.600" fill="#111" opacity="1"/><circle cx="7" cy="7" r="1" fill="#ccc" opacity="1"/><path d="M1.500 7 q6.500 -7 13 0" fill="none" stroke="#333" stroke-width="1.200" opacity="1"/></svg>
<div class="a" style="left:1722px;top:496px;width:15px;height:16px;background:#e0e0e0;border:1px solid #f2f2f2"></div>
<div class="a" style="left:1739px;top:496px;width:4px;height:15px;background:#e8601c"></div>
<svg width="8" height="12" viewBox="0 0 8 12" style="left:1751px;top:498px" ><path d="M1.500 1 L6.500 6 L1.500 11 Z" fill="#e8e8e8" stroke="#7a7a7a" stroke-width="1.200"/></svg>
<svg width="16" height="16" viewBox="0 0 16 16" style="left:1765px;top:496px" ><rect x="0.800" y="0.800" width="14.400" height="14.400" fill="#fff" stroke="#111" stroke-width="1.600"/><rect x="2" y="12" width="12" height="2" fill="#ddd"/><rect x="12" y="6" width="1" height="5" fill="#555"/></svg>
<span class="t " style="left:1785px;top:499px;font-size:10.5px;color:#111;">Vorlage</span>
<svg width="14" height="14" viewBox="0 0 14 14" style="left:1872px;top:497px" ><circle cx="7" cy="7" r="4.200" fill="none" stroke="#333" stroke-width="1.200"/></svg>
<svg width="14" height="16" viewBox="0 0 14 16" style="left:1723px;top:496px" ><rect x="3" y="7.500" width="8" height="6.500" rx="1" fill="#333"/><path d="M4.500 7.500 V5.500 a2.500 2.500 0 0 1 5 0 V7.500" fill="none" stroke="#333" stroke-width="1.500"/><rect x="6.500" y="10" width="1" height="2" fill="#bbb"/></svg>
<div class="a" style="left:1898px;top:474px;width:14px;height:236px;background:#f2f2f2"></div><svg width="14" height="8" viewBox="0 0 14 8" style="left:1898px;top:480px" ><path d="M4 5.500 L7 2.500 L10 5.500" fill="none" stroke="#777" stroke-width="1.700"/></svg><svg width="14" height="8" viewBox="0 0 14 8" style="left:1898px;top:698px" ><path d="M3.500 2 h7 l-3.500 4 z" fill="#777"/></svg>
<div class="a" style="left:1703px;top:710px;width:194px;height:1px;background:#111"></div>
<span class="t " style="left:1712px;top:713px;font-size:10px;color:#111;">2 Ebenen</span>
<svg width="16" height="13" viewBox="0 0 16 13" style="left:1782px;top:713px" ><rect x="1.500" y="1.500" width="8" height="6" fill="#eee" stroke="#666" stroke-dasharray="1 1"/><circle cx="9" cy="8" r="3.800" fill="#ddd" stroke="#333" stroke-width="1.200"/><path d="M9 8 h-3.500 a3.500 3.500 0 0 1 3.500 -3.500 z" fill="#222"/></svg>
<svg width="18" height="13" viewBox="0 0 18 13" style="left:1810px;top:713px" ><path d="M1 5.500 h6 M5 3 l2.500 2.500 l-2.500 2.500" fill="none" stroke="#222" stroke-width="1.300"/><path d="M9.500 2.500 h6 v9 h-9 v-3" fill="#eee" stroke="#333"/><path d="M11.500 7.500 h4 v4 h-4 z" fill="#fff" stroke="#222" stroke-width="1.200"/></svg>
<svg width="12" height="12" viewBox="0 0 12 12" style="left:1846px;top:714px" ><path d="M1.500 1.500 h9 v9 h-9 z" fill="#f2f2f2" stroke="#333" stroke-width="1"/><path d="M5.500 6 h5 v5 h-5 z" fill="#fff" stroke="#333" stroke-width="1.200"/></svg>
<svg width="10" height="13" viewBox="0 0 10 13" style="left:1879px;top:713px" ><path d="M1 3.500 h8 M3.500 1.500 h3 v2" fill="none" stroke="#333" stroke-width="1.200"/><path d="M1.500 4.500 h7 l-0.700 8 h-5.600 z" fill="#e0e0e0" stroke="#333" stroke-width="1.100"/><path d="M3.800 6 v5 M6.200 6 v5" stroke="#333"/></svg>
<svg width="10" height="10" viewBox="0 0 10 10" style="left:1903px;top:716px" shape-rendering="crispEdges"><rect x="8" y="8" width="1" height="1" fill="#9a9a9a"/><rect x="8" y="6" width="1" height="1" fill="#9a9a9a"/><rect x="8" y="4" width="1" height="1" fill="#9a9a9a"/><rect x="8" y="2" width="1" height="1" fill="#9a9a9a"/><rect x="6" y="8" width="1" height="1" fill="#9a9a9a"/><rect x="6" y="6" width="1" height="1" fill="#9a9a9a"/><rect x="6" y="4" width="1" height="1" fill="#9a9a9a"/><rect x="4" y="8" width="1" height="1" fill="#9a9a9a"/><rect x="4" y="6" width="1" height="1" fill="#9a9a9a"/><rect x="2" y="8" width="1" height="1" fill="#9a9a9a"/></svg>
<div class="a" style="left:1701px;top:728px;width:214px;height:3px;background:#3c3c3c"></div>
<div class="a" style="left:1701px;top:731px;width:214px;height:17px;background:linear-gradient(#9d9d9d,#8a8a8a);border-bottom:1px solid #6e6e6e"></div><div class="a" style="left:1701px;top:731px;width:58px;height:17px;background:linear-gradient(#e6e6e6,#d6d6d6);border-right:1px solid #777"></div><span class="t " style="left:1708px;top:735px;font-size:10px;color:#262626;font-weight:bold;letter-spacing:-0.2px">Aussehen</span><div class="a" style="left:1759px;top:731px;width:49px;height:17px;border-right:1px solid #6a6a6a;box-shadow:inset 1px 0 0 #a8a8a8"></div><span class="t " style="left:1766px;top:735px;font-size:10px;color:#262626;font-weight:bold;letter-spacing:-0.2px;text-shadow:0 1px 0 #b0b0b0">Verlauf</span><div class="a" style="left:1808px;top:731px;width:67px;height:17px;border-right:1px solid #6a6a6a;box-shadow:inset 1px 0 0 #a8a8a8"></div><span class="t " style="left:1815px;top:735px;font-size:10px;color:#262626;font-weight:bold;letter-spacing:-0.2px;text-shadow:0 1px 0 #b0b0b0">Transparenz</span><svg width="16" height="10" viewBox="0 0 16 10" style="left:1897px;top:735px" shape-rendering="crispEdges"><path d="M0 1.500 h4 l-2 2.500 z" fill="#222"/><path d="M5 1.500 h10 M5 4.500 h10 M5 7.500 h10" stroke="#222" stroke-width="1.200"/></svg>
<div class="a" style="left:1703px;top:749px;width:210px;height:1px;background:#111"></div>
<div class="a" style="left:1703px;top:750px;width:194px;height:125px;background:#d9d9d9"></div>
<div class="a" style="left:1705px;top:752px;width:20px;height:20px;background:#a8bd22;border:1px solid #111;box-shadow:inset 0 0 0 1px #eef4b0"></div>
<span class="t " style="left:1737px;top:757px;font-size:11px;color:#111;font-weight:bold">Pfad</span>
<div class="a" style="left:1703px;top:773px;width:194px;height:1px;background:#111"></div>
<div class="a" style="left:1724px;top:774px;width:1px;height:72px;background:#111"></div>
<svg width="16" height="16" viewBox="0 0 16 16" style="left:1704px;top:777px" ><rect x="0.500" y="0.500" width="15" height="15" fill="#dedede" stroke="#f2f2f2"/><path d="M2 8 q6 -6.500 12 0 q-6 6 -12 0 z" fill="#555" opacity="1"/><circle cx="8" cy="8" r="2.600" fill="#111" opacity="1"/><circle cx="7" cy="7" r="1" fill="#ccc" opacity="1"/><path d="M1.500 7 q6.500 -7 13 0" fill="none" stroke="#333" stroke-width="1.200" opacity="1"/></svg>
<svg width="8" height="12" viewBox="0 0 8 12" style="left:1727px;top:779px" ><path d="M1 1 L7 6 L1 11 Z" fill="none" stroke="#111" stroke-width="1.400"/></svg>
<span class="t " style="left:1738px;top:780px;font-size:11px;color:#2a2ad0;border-bottom:1px dotted #2a2ad0;padding-bottom:1px">Kontur:</span>
<div class="a" style="left:1703px;top:797px;width:194px;height:1px;background:#f0f0f0"></div>
<svg width="16" height="16" viewBox="0 0 16 16" style="left:1704px;top:801px" ><rect x="0.500" y="0.500" width="15" height="15" fill="#dedede" stroke="#f2f2f2"/><path d="M2 8 q6 -6.500 12 0 q-6 6 -12 0 z" fill="#555" opacity="1"/><circle cx="8" cy="8" r="2.600" fill="#111" opacity="1"/><circle cx="7" cy="7" r="1" fill="#ccc" opacity="1"/><path d="M1.500 7 q6.500 -7 13 0" fill="none" stroke="#333" stroke-width="1.200" opacity="1"/></svg>
<svg width="8" height="12" viewBox="0 0 8 12" style="left:1727px;top:803px" ><path d="M1 1 L7 6 L1 11 Z" fill="none" stroke="#111" stroke-width="1.400"/></svg>
<span class="t " style="left:1738px;top:804px;font-size:11px;color:#111;">Fläche:</span>
<div class="a" style="left:1703px;top:821px;width:194px;height:1px;background:#f0f0f0"></div>
<svg width="16" height="16" viewBox="0 0 16 16" style="left:1704px;top:825px" ><rect x="0.500" y="0.500" width="15" height="15" fill="#dedede" stroke="#f2f2f2"/><path d="M2 8 q6 -6.500 12 0 q-6 6 -12 0 z" fill="#555" opacity="0.45"/><circle cx="8" cy="8" r="2.600" fill="#111" opacity="0.45"/><circle cx="7" cy="7" r="1" fill="#ccc" opacity="0.45"/><path d="M1.500 7 q6.500 -7 13 0" fill="none" stroke="#333" stroke-width="1.200" opacity="0.45"/></svg>
<span class="t " style="left:1738px;top:828px;font-size:11px;color:#2a2ad0;border-bottom:1px dotted #2a2ad0;padding-bottom:1px">Deckkraft:</span>
<div class="a" style="left:1783px;top:777px;width:18px;height:18px;background:#fff;border:1px solid #111"></div>
<svg width="14" height="14" viewBox="0 0 14 14" style="left:1785px;top:779px" ><rect x="0.600" y="0.600" width="12.8" height="12.8" fill="#fff" stroke="#111" stroke-width="1"/><path d="M1.500 12.5 L12.5 1.500" stroke="#d0102a" stroke-width="1.800"/></svg>
<div class="a" style="left:1783px;top:801px;width:18px;height:18px;background:#fff;border:1px solid #111"></div>
<div class="a" style="left:1785px;top:803px;width:14px;height:14px;background:#a8bd22;border:1px solid #111"></div>
<span class="t " style="left:1792px;top:830px;font-size:10.5px;color:#111;">Standard</span>
<div class="a" style="left:1703px;top:845px;width:194px;height:1px;background:#111"></div>
<div class="a" style="left:1898px;top:750px;width:14px;height:125px;background:#f2f2f2"></div><svg width="14" height="8" viewBox="0 0 14 8" style="left:1898px;top:756px" ><path d="M4 5.500 L7 2.500 L10 5.500" fill="none" stroke="#777" stroke-width="1.700"/></svg><svg width="14" height="8" viewBox="0 0 14 8" style="left:1898px;top:863px" ><path d="M3.500 2 h7 l-3.500 4 z" fill="#777"/></svg>
<div class="a" style="left:1703px;top:875px;width:194px;height:1px;background:#111"></div>
<div class="a" style="left:1714px;top:878px;width:11px;height:11px;background:#4a4a4a;border:3px solid #333"></div>
<div class="a" style="left:1748px;top:878px;width:11px;height:11px;background:#fff;border:1px solid #333"></div>
<span class="t " style="left:1780px;top:875px;font-size:15px;color:#222;font-family:'Liberation Serif',serif;font-style:italic;font-weight:bold">fx</span>
<svg width="5" height="5" viewBox="0 0 5 5" style="left:1794px;top:886px" ><path d="M5 5 h-4 l4 -4 z" fill="#111"/></svg>
<svg width="13" height="13" viewBox="0 0 13 13" style="left:1812px;top:877px" ><circle cx="6.500" cy="6.500" r="4.600" fill="#fff" stroke="#333" stroke-width="1.500"/><path d="M3.300 3.300 L9.700 9.700" stroke="#333" stroke-width="1.500"/></svg>
<svg width="12" height="12" viewBox="0 0 12 12" style="left:1847px;top:878px" ><path d="M1.500 1.500 h9 v9 h-9 z" fill="#f2f2f2" stroke="#999" stroke-width="1"/><path d="M5.500 6 h5 v5 h-5 z" fill="#fff" stroke="#999" stroke-width="1.200"/></svg>
<svg width="10" height="13" viewBox="0 0 10 13" style="left:1879px;top:877px" ><path d="M1 3.500 h8 M3.500 1.500 h3 v2" fill="none" stroke="#999" stroke-width="1.200"/><path d="M1.500 4.500 h7 l-0.700 8 h-5.600 z" fill="#e0e0e0" stroke="#999" stroke-width="1.100"/><path d="M3.800 6 v5 M6.200 6 v5" stroke="#999"/></svg>
<div class="a" style="left:1701px;top:893px;width:214px;height:3px;background:#3c3c3c"></div>
<div class="a" style="left:1701px;top:896px;width:214px;height:17px;background:linear-gradient(#9d9d9d,#8a8a8a);border-bottom:1px solid #6e6e6e"></div><div class="a" style="left:1701px;top:896px;width:73px;height:17px;background:linear-gradient(#e6e6e6,#d6d6d6);border-right:1px solid #777"></div><svg width="8" height="10" viewBox="0 0 8 10" style="left:1704px;top:900px" ><path d="M1.500 4 L4 1.500 L6.500 4 M1.500 6 L4 8.500 L6.500 6" fill="none" stroke="#222" stroke-width="1.400"/></svg><span class="t " style="left:1713px;top:900px;font-size:10px;color:#262626;font-weight:bold;letter-spacing:-0.2px">Ausrichten</span><div class="a" style="left:1774px;top:896px;width:64px;height:17px;border-right:1px solid #6a6a6a;box-shadow:inset 1px 0 0 #a8a8a8"></div><span class="t " style="left:1781px;top:900px;font-size:10px;color:#262626;font-weight:bold;letter-spacing:-0.2px;text-shadow:0 1px 0 #b0b0b0">Pathfinder</span><svg width="16" height="10" viewBox="0 0 16 10" style="left:1897px;top:900px" shape-rendering="crispEdges"><path d="M0 1.500 h4 l-2 2.500 z" fill="#222"/><path d="M5 1.500 h10 M5 4.500 h10 M5 7.500 h10" stroke="#222" stroke-width="1.200"/></svg>
<span class="t " style="left:1706px;top:918px;font-size:10.5px;color:#111;">Objekte ausrichten:</span>
<span class="t " style="left:1706px;top:956px;font-size:10.5px;color:#111;">Objekte verteilen:</span>
<span class="t " style="left:1706px;top:994px;font-size:10.5px;color:#111;">Abstand verteilen:</span>
<span class="t " style="left:1841px;top:996px;font-size:10.5px;color:#111;">Ausrichten an:</span>
<div class="a" style="left:1706px;top:951px;width:205px;height:1px;background:#a6a6a6"></div>
<div class="a" style="left:1706px;top:952px;width:205px;height:1px;background:#eee"></div>
<div class="a" style="left:1706px;top:989px;width:205px;height:1px;background:#a6a6a6"></div>
<div class="a" style="left:1706px;top:990px;width:205px;height:1px;background:#eee"></div>
<div class="a" style="left:1835px;top:996px;width:1px;height:28px;background:#a6a6a6"></div>
<div class="a" style="left:1836px;top:996px;width:1px;height:28px;background:#eee"></div>
<svg width="18" height="14" viewBox="0 0 18 14" style="left:1712px;top:932px" shape-rendering="crispEdges"><rect x="0" y="0" width="1" height="14" fill="#1a1a1a"/><rect x="2" y="1" width="7" height="5" fill="#2a2a2a"/><rect x="3" y="2" width="5" height="3" fill="#f2f2f2"/><rect x="2" y="7" width="13" height="6" fill="#2a2a2a"/><rect x="3" y="8" width="11" height="4" fill="#b4b4b4"/><rect x="3" y="8" width="11" height="1" fill="#e8e8e8"/></svg>
<svg width="18" height="15" viewBox="0 0 18 15" style="left:1712px;top:970px" shape-rendering="crispEdges"><rect x="0" y="1" width="17" height="1" fill="#1a1a1a"/><rect x="0" y="8" width="17" height="1" fill="#1a1a1a"/><rect x="5" y="2" width="7" height="4" fill="#2a2a2a"/><rect x="6" y="3" width="5" height="2" fill="#f2f2f2"/><rect x="3" y="9" width="11" height="4" fill="#2a2a2a"/><rect x="4" y="10" width="9" height="2" fill="#b4b4b4"/><rect x="4" y="10" width="9" height="1" fill="#e8e8e8"/></svg>
<svg width="18" height="14" viewBox="0 0 18 14" style="left:1746px;top:932px" shape-rendering="crispEdges"><rect x="7" y="0" width="1" height="14" fill="#1a1a1a"/><rect x="4" y="1" width="7" height="5" fill="#2a2a2a"/><rect x="5" y="2" width="5" height="3" fill="#f2f2f2"/><rect x="1" y="7" width="13" height="6" fill="#2a2a2a"/><rect x="2" y="8" width="11" height="4" fill="#b4b4b4"/><rect x="2" y="8" width="11" height="1" fill="#e8e8e8"/></svg>
<svg width="18" height="15" viewBox="0 0 18 15" style="left:1746px;top:970px" shape-rendering="crispEdges"><rect x="0" y="3" width="17" height="1" fill="#1a1a1a"/><rect x="0" y="10" width="17" height="1" fill="#1a1a1a"/><rect x="5" y="1" width="7" height="4" fill="#2a2a2a"/><rect x="6" y="2" width="5" height="2" fill="#f2f2f2"/><rect x="3" y="8" width="11" height="5" fill="#2a2a2a"/><rect x="4" y="9" width="9" height="3" fill="#b4b4b4"/><rect x="4" y="9" width="9" height="1" fill="#e8e8e8"/></svg>
<svg width="18" height="14" viewBox="0 0 18 14" style="left:1781px;top:932px" shape-rendering="crispEdges"><rect x="14" y="0" width="1" height="14" fill="#1a1a1a"/><rect x="7" y="1" width="7" height="5" fill="#2a2a2a"/><rect x="8" y="2" width="5" height="3" fill="#f2f2f2"/><rect x="1" y="7" width="13" height="6" fill="#2a2a2a"/><rect x="2" y="8" width="11" height="4" fill="#b4b4b4"/><rect x="2" y="8" width="11" height="1" fill="#e8e8e8"/></svg>
<svg width="18" height="15" viewBox="0 0 18 15" style="left:1781px;top:970px" shape-rendering="crispEdges"><rect x="0" y="5" width="17" height="1" fill="#1a1a1a"/><rect x="0" y="13" width="17" height="1" fill="#1a1a1a"/><rect x="5" y="1" width="7" height="4" fill="#2a2a2a"/><rect x="6" y="2" width="5" height="2" fill="#f2f2f2"/><rect x="3" y="9" width="11" height="4" fill="#2a2a2a"/><rect x="4" y="10" width="9" height="2" fill="#b4b4b4"/><rect x="4" y="10" width="9" height="1" fill="#e8e8e8"/></svg>
<svg width="18" height="14" viewBox="0 0 18 14" style="left:1815px;top:932px" shape-rendering="crispEdges"><rect x="0" y="1" width="17" height="1" fill="#1a1a1a"/><rect x="2" y="3" width="6" height="10" fill="#2a2a2a"/><rect x="3" y="4" width="4" height="8" fill="#b4b4b4"/><rect x="3" y="4" width="4" height="1" fill="#e8e8e8"/><rect x="10" y="3" width="5" height="5" fill="#2a2a2a"/><rect x="11" y="4" width="3" height="3" fill="#f2f2f2"/></svg>
<svg width="18" height="15" viewBox="0 0 18 15" style="left:1815px;top:970px" shape-rendering="crispEdges"><rect x="3" y="0" width="1" height="14" fill="#1a1a1a"/><rect x="10" y="0" width="1" height="14" fill="#1a1a1a"/><rect x="4" y="2" width="4" height="10" fill="#2a2a2a"/><rect x="5" y="3" width="2" height="8" fill="#b4b4b4"/><rect x="5" y="3" width="2" height="1" fill="#e8e8e8"/><rect x="11" y="4" width="4" height="6" fill="#2a2a2a"/><rect x="12" y="5" width="2" height="4" fill="#f2f2f2"/></svg>
<svg width="18" height="14" viewBox="0 0 18 14" style="left:1849px;top:932px" shape-rendering="crispEdges"><rect x="0" y="7" width="18" height="1" fill="#1a1a1a"/><rect x="3" y="2" width="6" height="11" fill="#2a2a2a"/><rect x="4" y="3" width="4" height="9" fill="#b4b4b4"/><rect x="4" y="3" width="4" height="1" fill="#e8e8e8"/><rect x="11" y="5" width="5" height="5" fill="#2a2a2a"/><rect x="12" y="6" width="3" height="3" fill="#f2f2f2"/></svg>
<svg width="18" height="15" viewBox="0 0 18 15" style="left:1849px;top:970px" shape-rendering="crispEdges"><rect x="5" y="0" width="1" height="14" fill="#1a1a1a"/><rect x="12" y="0" width="1" height="14" fill="#1a1a1a"/><rect x="3" y="2" width="5" height="10" fill="#2a2a2a"/><rect x="4" y="3" width="3" height="8" fill="#b4b4b4"/><rect x="4" y="3" width="3" height="1" fill="#e8e8e8"/><rect x="10" y="4" width="5" height="6" fill="#2a2a2a"/><rect x="11" y="5" width="3" height="4" fill="#f2f2f2"/></svg>
<svg width="18" height="14" viewBox="0 0 18 14" style="left:1883px;top:932px" shape-rendering="crispEdges"><rect x="0" y="13" width="17" height="1" fill="#1a1a1a"/><rect x="2" y="2" width="6" height="10" fill="#2a2a2a"/><rect x="3" y="3" width="4" height="8" fill="#b4b4b4"/><rect x="3" y="3" width="4" height="1" fill="#e8e8e8"/><rect x="10" y="7" width="5" height="5" fill="#2a2a2a"/><rect x="11" y="8" width="3" height="3" fill="#f2f2f2"/></svg>
<svg width="18" height="15" viewBox="0 0 18 15" style="left:1883px;top:970px" shape-rendering="crispEdges"><rect x="7" y="0" width="1" height="14" fill="#1a1a1a"/><rect x="14" y="0" width="1" height="14" fill="#1a1a1a"/><rect x="3" y="2" width="4" height="10" fill="#2a2a2a"/><rect x="4" y="3" width="2" height="8" fill="#b4b4b4"/><rect x="4" y="3" width="2" height="1" fill="#e8e8e8"/><rect x="10" y="4" width="4" height="6" fill="#2a2a2a"/><rect x="11" y="5" width="2" height="4" fill="#f2f2f2"/></svg>
<svg width="18" height="17" viewBox="0 0 18 17" style="left:1712px;top:1009px" shape-rendering="crispEdges"><rect x="0" y="6" width="17" height="1" fill="#111"/><rect x="0" y="9" width="17" height="1" fill="#111"/><rect x="4.500" y="1.500" width="8" height="3" fill="#bbb" stroke="#333"/><rect x="7.500" y="11.500" width="3" height="3" fill="#eee" stroke="#333"/></svg>
<svg width="18" height="17" viewBox="0 0 18 17" style="left:1745px;top:1009px" shape-rendering="crispEdges"><rect x="6" y="1" width="1" height="14" fill="#111"/><rect x="9" y="1" width="1" height="14" fill="#111"/><rect x="1.500" y="1.500" width="3" height="3" fill="#eee" stroke="#333"/><rect x="11.500" y="4.500" width="3" height="9" fill="#bbb" stroke="#333"/></svg>
<div class="a" style="left:1776px;top:1008px;width:54px;height:19px;background:#dcdcdc;border:1px solid #f4f4f4;outline:1px solid #c0c0c0;outline-offset:-2px"></div>
<div class="a" style="left:1778px;top:1010px;width:13px;height:15px;background:#e8e8e8;border:1px solid #f8f8f8"></div>
<svg width="13" height="15" viewBox="0 0 13 15" style="left:1778px;top:1010px" ><path d="M3.500 6 l3 -3.500 l3 3.500 z M3.500 9 l3 3.500 l3 -3.500 z" fill="#b0b0b0"/></svg>
<span class="t " style="left:1796px;top:1012px;font-size:10.5px;color:#9a9a9a;">0 mm</span>
<svg width="26" height="17" viewBox="0 0 26 17" style="left:1861px;top:1009px" ><rect x="1" y="1" width="13" height="15" fill="#fafafa" stroke="#222" stroke-width="1.600"/><rect x="4.500" y="4.500" width="6" height="8" fill="#bbb" stroke="#222" stroke-width="1.200"/><path d="M7.500 1 v15 M1 8.500 h13" stroke="#222"/><path d="M17 6.500 h6 l-3 4.500 z" fill="#111"/></svg>
<div class="a" style="left:1701px;top:1035px;width:215px;height:1px;background:#4e4e4e"></div><div class="a" style="left:65px;top:1019px;width:1635px;height:16px;background:#ececec;border-top:1px solid #d8d8d8"></div>
<div class="a" style="left:65px;top:1020px;width:59px;height:15px;background:#fff"></div>
<span class="t " style="left:71px;top:1023px;font-size:10.5px;color:#111;">207%</span>
<svg width="10" height="7" viewBox="0 0 10 7" style="left:112px;top:1025px" ><path d="M0.500 0.500 h8 l-4 4.500 z" fill="#111"/></svg>
<div class="a" style="left:124px;top:1020px;width:34px;height:15px;background:#d8d8d8"></div>
<svg width="8" height="9" viewBox="0 0 8 9" style="left:128px;top:1022px" ><rect x="0.500" y="0.500" width="1.300" height="8" fill="#8a8a8a"/><path d="M7 0.500 v8 l-4.500 -4 z" fill="#8a8a8a"/></svg>
<svg width="6" height="9" viewBox="0 0 6 9" style="left:146px;top:1022px" ><path d="M5 0.500 v8 l-4.500 -4 z" fill="#8a8a8a"/></svg>
<div class="a" style="left:158px;top:1020px;width:43px;height:15px;background:#fff"></div>
<span class="t " style="left:163px;top:1023px;font-size:10.5px;color:#111;">1</span>
<svg width="10" height="7" viewBox="0 0 10 7" style="left:189px;top:1025px" ><path d="M0.500 0.500 h8 l-4 4.500 z" fill="#111"/></svg>
<div class="a" style="left:201px;top:1020px;width:34px;height:15px;background:#d8d8d8"></div>
<svg width="6" height="9" viewBox="0 0 6 9" style="left:208px;top:1022px" ><path d="M1 0.500 v8 l4.500 -4 z" fill="#8a8a8a"/></svg>
<svg width="8" height="9" viewBox="0 0 8 9" style="left:221px;top:1022px" ><rect x="6" y="0.500" width="1.300" height="8" fill="#8a8a8a"/><path d="M1 0.500 v8 l4.500 -4 z" fill="#8a8a8a"/></svg>
<div class="a" style="left:236px;top:1020px;width:178px;height:15px;background:#cfcfcf;border:1px solid #e4e4e4"></div>
<span class="t " style="left:307px;top:1022px;font-size:10.5px;color:#111;">Auswahl</span>
<svg width="8" height="11" viewBox="0 0 8 11" style="left:402px;top:1022px" ><path d="M1 0.500 v10 l5.500 -5 z" fill="#000"/></svg>
<svg width="6" height="8" viewBox="0 0 6 8" style="left:419px;top:1023px" ><path d="M5 0.500 v7 l-4 -3.500 z" fill="#555"/></svg>
<svg width="6" height="8" viewBox="0 0 6 8" style="left:1673px;top:1023px" ><path d="M1 0.500 v7 l4 -3.500 z" fill="#555"/></svg>
<div class="a" style="left:1041px;top:1020px;width:15px;height:14px;background:linear-gradient(#f4f4f4,#c8c8c8);border:1px solid #aaa"></div>
<div class="a" style="left:1685px;top:1019px;width:15px;height:16px;background:#f8f8f8"></div>
<div class="a" style="left:4px;top:1035px;width:1697px;height:1px;background:#4e4e4e"></div>
<div class="a" style="left:64px;top:1019px;width:1px;height:16px;background:#4a4a4a"></div>
</div>
</body></html>
